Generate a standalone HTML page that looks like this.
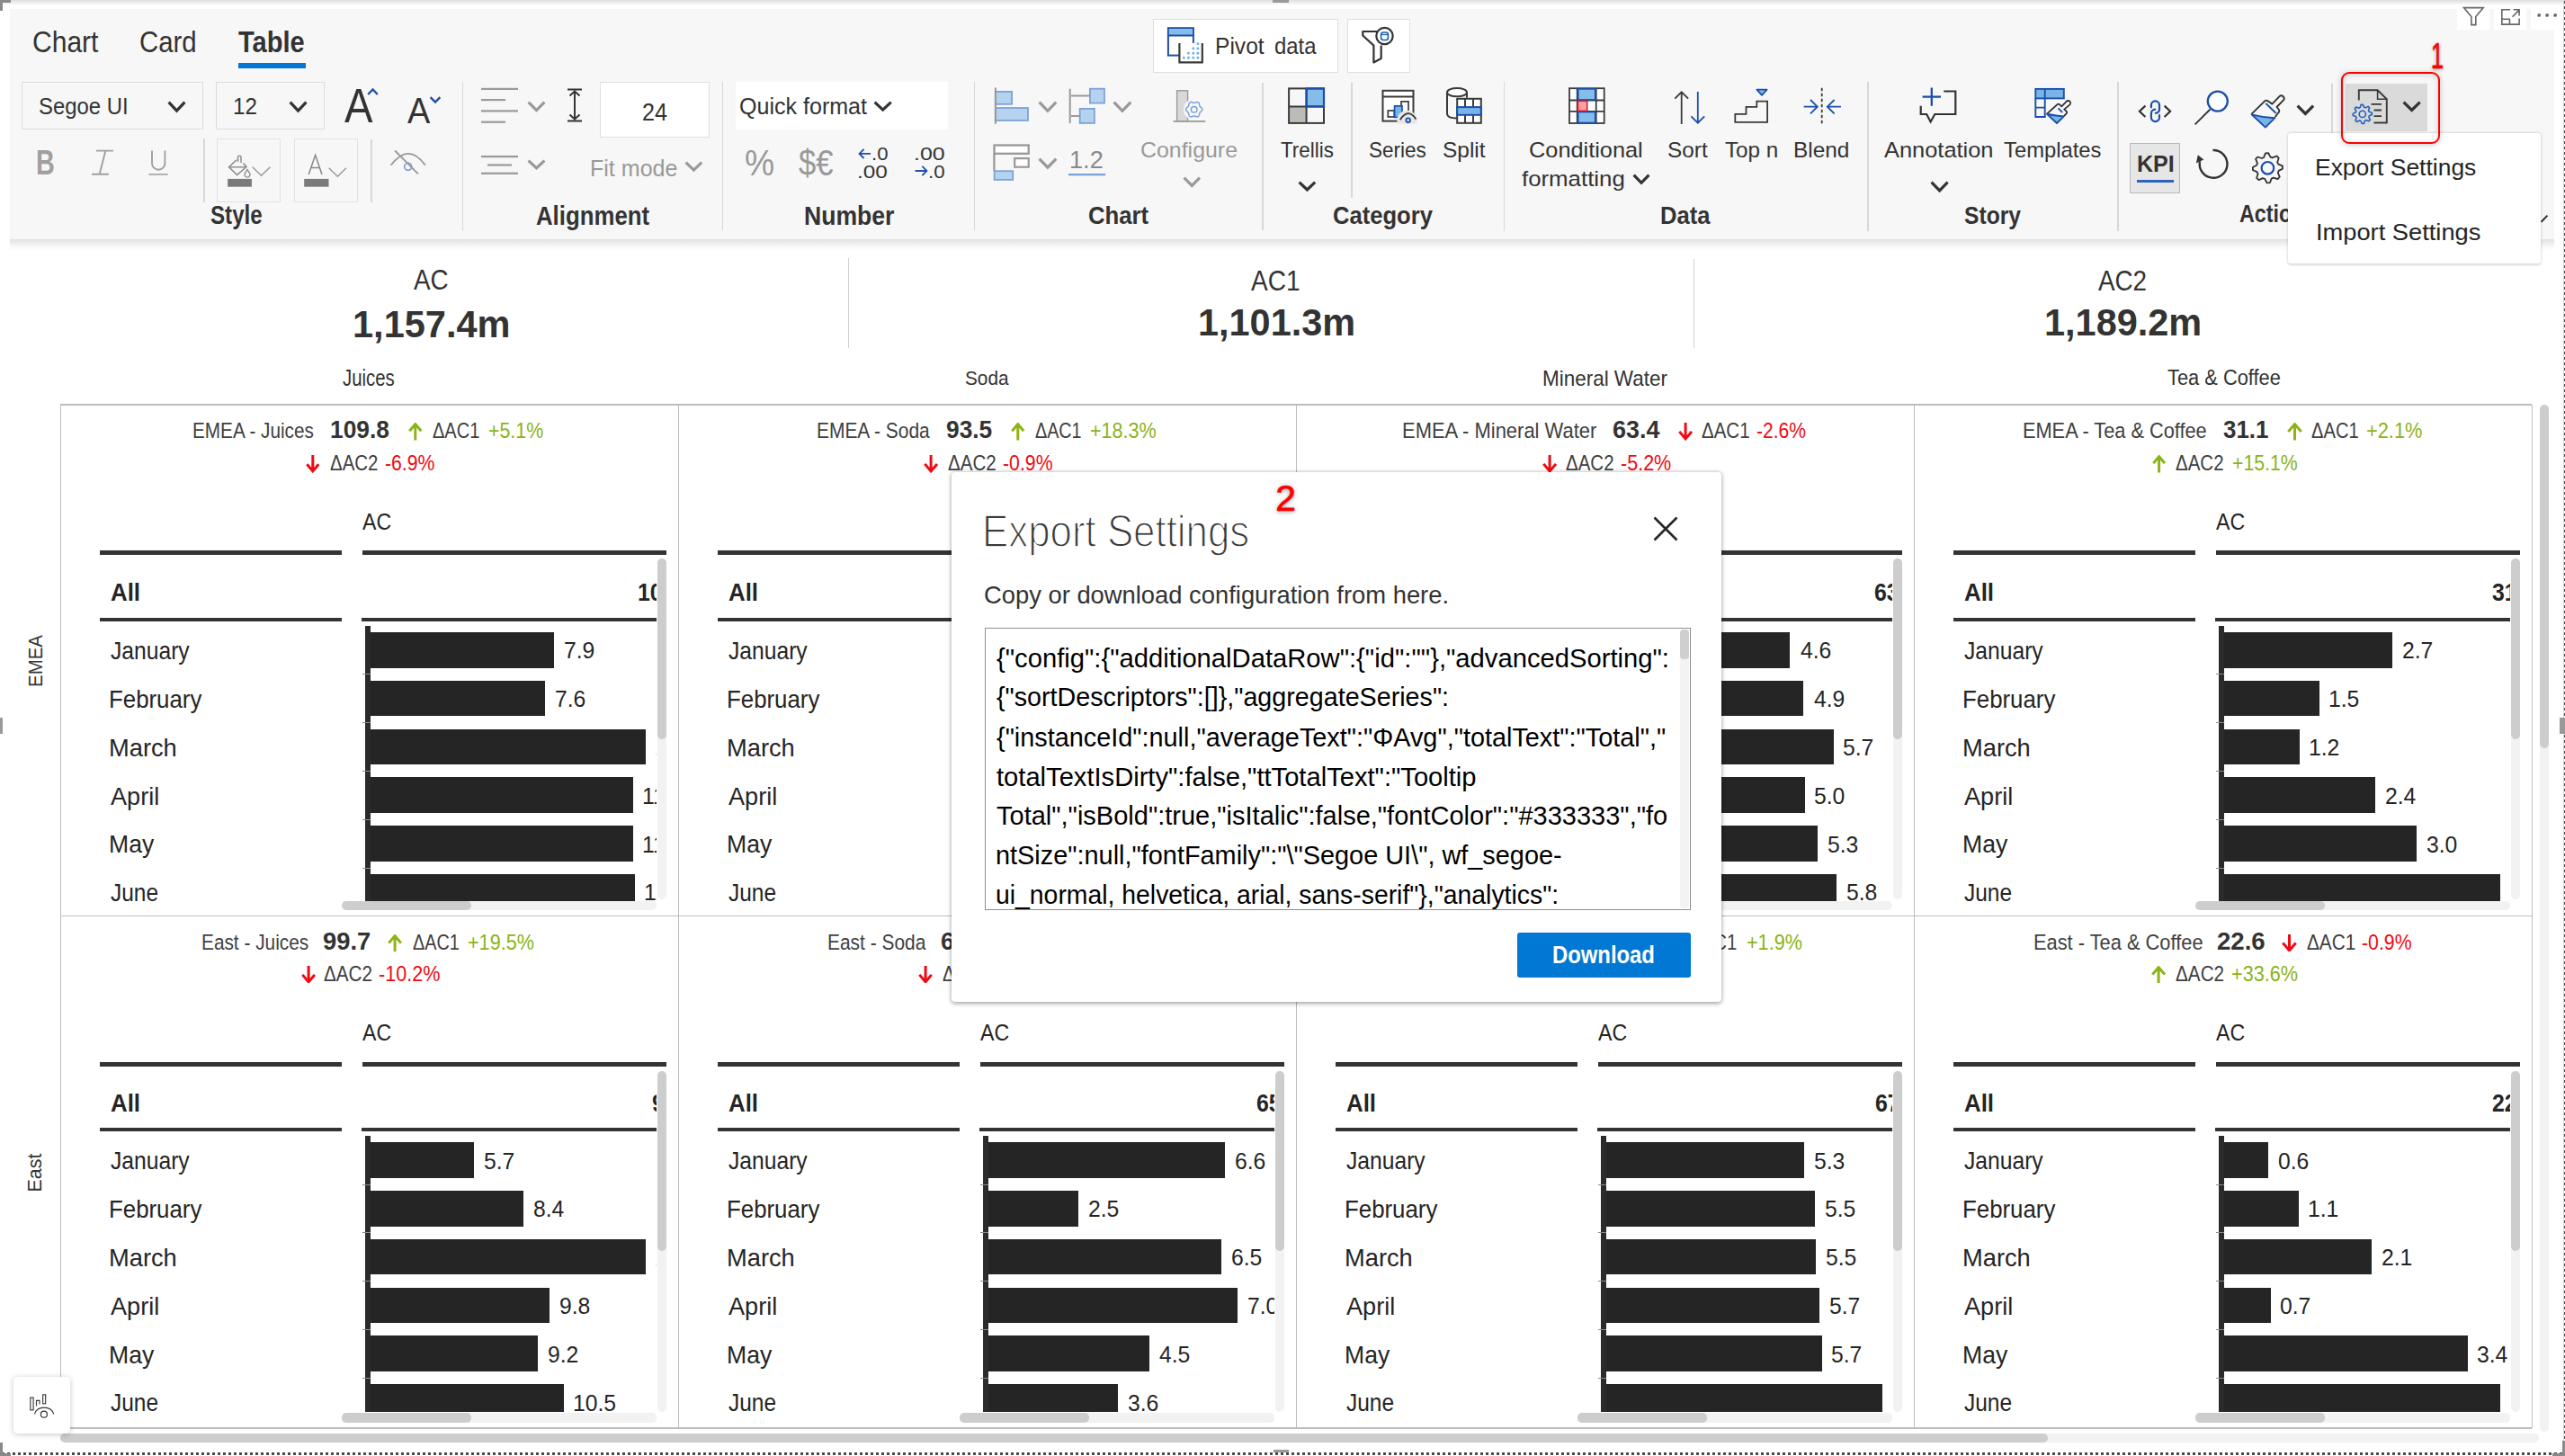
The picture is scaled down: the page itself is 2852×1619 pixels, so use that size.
<!DOCTYPE html>
<html><head><meta charset="utf-8"><style>
html,body{margin:0;padding:0;width:2852px;height:1619px;overflow:hidden;background:#fff;position:relative;font-family:'Liberation Sans', sans-serif;}
.t{position:absolute;white-space:pre;transform-origin:0 0;}
.a{position:absolute;}
</style></head><body>
<div style="position:absolute;left:11.0px;top:10.0px;width:2829.0px;height:256.0px;background:#f7f7f7;"></div>
<div style="position:absolute;left:11.0px;top:266.0px;width:2829.0px;height:13.0px;background:linear-gradient(rgba(0,0,0,0.115),rgba(0,0,0,0.03) 60%,rgba(0,0,0,0));"></div>
<div style="position:absolute;left:265.0px;top:70.0px;width:75.0px;height:6.0px;background:#0078d4;"></div>
<div style="position:absolute;left:513.5px;top:91.0px;width:1.5px;height:165.5px;background:#d8d8d8;"></div>
<div style="position:absolute;left:802.6px;top:91.0px;width:1.5px;height:165.0px;background:#d8d8d8;"></div>
<div style="position:absolute;left:1082.7px;top:91.0px;width:1.5px;height:165.0px;background:#d8d8d8;"></div>
<div style="position:absolute;left:1403.2px;top:91.7px;width:1.5px;height:164.3px;background:#d8d8d8;"></div>
<div style="position:absolute;left:1502.2px;top:91.7px;width:1.5px;height:128.8px;background:#d8d8d8;"></div>
<div style="position:absolute;left:1671.5px;top:91.3px;width:1.5px;height:165.7px;background:#d8d8d8;"></div>
<div style="position:absolute;left:2076.1px;top:91.3px;width:1.5px;height:165.7px;background:#d8d8d8;"></div>
<div style="position:absolute;left:2354.2px;top:91.0px;width:1.5px;height:166.0px;background:#d8d8d8;"></div>
<div style="position:absolute;left:2592.2px;top:92.7px;width:1.5px;height:164.3px;background:#d8d8d8;"></div>
<div style="position:absolute;left:226.3px;top:154.4px;width:1.5px;height:70.6px;background:#d8d8d8;"></div>
<div style="position:absolute;left:412.0px;top:154.5px;width:1.5px;height:70.5px;background:#d8d8d8;"></div>
<div style="position:absolute;left:24.0px;top:91.0px;width:201.7px;height:53.0px;background:transparent;box-sizing:border-box;border:1.5px solid #dcdcdc;"></div>
<div style="position:absolute;left:240.0px;top:91.0px;width:120.5px;height:53.0px;background:transparent;box-sizing:border-box;border:1.5px solid #dcdcdc;"></div>
<svg class="a" style="left:95px;top:160px" width="100" height="40" viewBox="95 160 100 40"><path d="M107,167.6 H126 M102,193.8 H120.8 M117.3,167.8 L110.7,193.6" fill="none" stroke="#a0a0a0" stroke-width="1.9"/><path d="M169,167.4 V181.5 A7.2,7.2 0 0 0 183.4,181.5 V167.4" fill="none" stroke="#a0a0a0" stroke-width="1.9"/><rect x="165.4" y="193.1" width="21.4" height="1.6" fill="#a0a0a0"/></svg>
<div style="position:absolute;left:241.4px;top:154.4px;width:70.5px;height:70.6px;background:transparent;box-sizing:border-box;border:1.5px solid #e2e2e2;"></div>
<div style="position:absolute;left:326.7px;top:154.4px;width:71.0px;height:70.6px;background:transparent;box-sizing:border-box;border:1.5px solid #e2e2e2;"></div>
<div style="position:absolute;left:666.6px;top:91.0px;width:122.4px;height:62.0px;background:#fff;box-sizing:border-box;border:1.5px solid #e0e0e0;"></div>
<div style="position:absolute;left:817.8px;top:91.0px;width:236.2px;height:53.4px;background:#fff;"></div>
<div style="position:absolute;left:1282.3px;top:21.0px;width:206.1px;height:60.3px;background:#fff;box-sizing:border-box;border:1.5px solid #dedede;"></div>
<div style="position:absolute;left:1498.0px;top:21.0px;width:69.8px;height:60.3px;background:#fff;box-sizing:border-box;border:1.5px solid #dedede;"></div>
<div style="position:absolute;left:1188.0px;top:193.3px;width:41.0px;height:2.2px;background:#5b8fd6;"></div>
<div style="position:absolute;left:2368.2px;top:158.7px;width:56.3px;height:56.0px;background:#e6e6e6;box-sizing:border-box;border:1.5px solid #b8b8b8;"></div>
<div style="position:absolute;left:2376.0px;top:200.0px;width:40.5px;height:2.5px;background:#2b63c4;"></div>
<div style="position:absolute;left:2607.5px;top:92.7px;width:91.5px;height:53.2px;background:#dadada;"></div>
<div style="position:absolute;left:2731.5px;top:0.0px;width:36.1px;height:32.6px;background:#fff;"></div>
<div style="position:absolute;left:2772.7px;top:0.0px;width:36.1px;height:32.6px;background:#fff;"></div>
<div style="position:absolute;left:2814.0px;top:0.0px;width:26.7px;height:32.6px;background:#fff;"></div>
<div class="t" style="left:35.69px;top:30.57px;font:400 32.86px 'Liberation Sans', sans-serif;line-height:1;color:#333;transform:scaleX(0.9139);">Chart</div>
<div class="t" style="left:155.11px;top:30.57px;font:400 32.86px 'Liberation Sans', sans-serif;line-height:1;color:#333;transform:scaleX(0.8934);">Card</div>
<div class="t" style="left:265.00px;top:30.57px;font:700 32.86px 'Liberation Sans', sans-serif;line-height:1;color:#333;transform:scaleX(0.8844);">Table</div>
<div class="t" style="left:43.07px;top:106.14px;font:400 25.71px 'Liberation Sans', sans-serif;line-height:1;color:#333;transform:scaleX(0.9286);">Segoe UI</div>
<div class="t" style="left:259.06px;top:106.14px;font:400 25.71px 'Liberation Sans', sans-serif;line-height:1;color:#333;transform:scaleX(0.9393);">12</div>
<div class="t" style="left:382.50px;top:90.86px;font:400 54.29px 'Liberation Sans', sans-serif;line-height:1;color:#333;transform:scaleX(0.8703);">A</div>
<div class="t" style="left:453.00px;top:101.79px;font:400 41.43px 'Liberation Sans', sans-serif;line-height:1;color:#333;transform:scaleX(0.9143);">A</div>
<div class="t" style="left:40.00px;top:161.71px;font:700 38.57px 'Liberation Sans', sans-serif;line-height:1;color:#a0a0a0;transform:scaleX(0.7480);">B</div>
<div class="t" style="left:233.70px;top:225.31px;font:700 28.57px 'Liberation Sans', sans-serif;line-height:1;color:#333;transform:scaleX(0.8459);">Style</div>
<div class="t" style="left:714.07px;top:110.93px;font:400 27.14px 'Liberation Sans', sans-serif;line-height:1;color:#333;transform:scaleX(0.9283);">24</div>
<div class="t" style="left:656.01px;top:175.23px;font:400 25.14px 'Liberation Sans', sans-serif;line-height:1;color:#999;transform:scaleX(0.9972);">Fit mode</div>
<div class="t" style="left:596.00px;top:226.01px;font:700 28.57px 'Liberation Sans', sans-serif;line-height:1;color:#333;transform:scaleX(0.9028);">Alignment</div>
<div class="t" style="left:821.73px;top:106.44px;font:400 25.71px 'Liberation Sans', sans-serif;line-height:1;color:#333;transform:scaleX(0.9748);">Quick format</div>
<div class="t" style="left:828.09px;top:160.67px;font:400 40.86px 'Liberation Sans', sans-serif;line-height:1;color:#999;transform:scaleX(0.9118);">%</div>
<div class="t" style="left:888.00px;top:160.67px;font:400 40.86px 'Liberation Sans', sans-serif;line-height:1;color:#999;transform:scaleX(0.8464);">$€</div>
<div class="t" style="left:893.57px;top:226.01px;font:700 28.57px 'Liberation Sans', sans-serif;line-height:1;color:#333;transform:scaleX(0.9307);">Number</div>
<div class="t" style="left:1351.08px;top:38.76px;font:400 25.57px 'Liberation Sans', sans-serif;line-height:1;color:#333;transform:scaleX(0.9611);">Pivot</div>
<div class="t" style="left:1416.97px;top:38.76px;font:400 25.57px 'Liberation Sans', sans-serif;line-height:1;color:#333;transform:scaleX(0.9347);">data</div>
<div class="t" style="left:1268.39px;top:154.71px;font:400 24.57px 'Liberation Sans', sans-serif;line-height:1;color:#999;transform:scaleX(1.0139);">Configure</div>
<div class="t" style="left:1189.00px;top:163.63px;font:400 27.14px 'Liberation Sans', sans-serif;line-height:1;color:#8a8a8a;transform:scaleX(1.0023);">1.2</div>
<div class="t" style="left:1209.88px;top:226.02px;font:700 27.86px 'Liberation Sans', sans-serif;line-height:1;color:#333;transform:scaleX(0.9234);">Chart</div>
<div class="t" style="left:1423.60px;top:154.71px;font:400 24.57px 'Liberation Sans', sans-serif;line-height:1;color:#333;transform:scaleX(0.9113);">Trellis</div>
<div class="t" style="left:1522.08px;top:154.71px;font:400 24.57px 'Liberation Sans', sans-serif;line-height:1;color:#333;transform:scaleX(0.9175);">Series</div>
<div class="t" style="left:1604.31px;top:154.71px;font:400 24.57px 'Liberation Sans', sans-serif;line-height:1;color:#333;transform:scaleX(0.9945);">Split</div>
<div class="t" style="left:1482.48px;top:226.02px;font:700 27.86px 'Liberation Sans', sans-serif;line-height:1;color:#333;transform:scaleX(0.9180);">Category</div>
<div class="t" style="left:1700.47px;top:154.99px;font:400 24.71px 'Liberation Sans', sans-serif;line-height:1;color:#333;transform:scaleX(1.0255);">Conditional</div>
<div class="t" style="left:1692.00px;top:186.79px;font:400 24.71px 'Liberation Sans', sans-serif;line-height:1;color:#333;transform:scaleX(1.0449);">formatting</div>
<div class="t" style="left:1854.01px;top:154.99px;font:400 24.71px 'Liberation Sans', sans-serif;line-height:1;color:#333;transform:scaleX(0.9856);">Sort</div>
<div class="t" style="left:1918.00px;top:154.99px;font:400 24.71px 'Liberation Sans', sans-serif;line-height:1;color:#333;transform:scaleX(0.9817);">Top n</div>
<div class="t" style="left:1994.02px;top:154.99px;font:400 24.71px 'Liberation Sans', sans-serif;line-height:1;color:#333;transform:scaleX(0.9877);">Blend</div>
<div class="t" style="left:1846.08px;top:226.32px;font:700 27.86px 'Liberation Sans', sans-serif;line-height:1;color:#333;transform:scaleX(0.9183);">Data</div>
<div class="t" style="left:2095.30px;top:154.99px;font:400 24.71px 'Liberation Sans', sans-serif;line-height:1;color:#333;transform:scaleX(1.0282);">Annotation</div>
<div class="t" style="left:2228.20px;top:154.99px;font:400 24.71px 'Liberation Sans', sans-serif;line-height:1;color:#333;transform:scaleX(0.9632);">Templates</div>
<div class="t" style="left:2184.00px;top:226.32px;font:700 27.86px 'Liberation Sans', sans-serif;line-height:1;color:#333;transform:scaleX(0.8840);">Story</div>
<div class="t" style="left:2375.76px;top:169.01px;font:700 26.57px 'Liberation Sans', sans-serif;line-height:1;color:#333;transform:scaleX(0.9427);">KPI</div>
<div class="t" style="left:2490.00px;top:223.86px;font:700 27.57px 'Liberation Sans', sans-serif;line-height:1;color:#333;transform:scaleX(0.8437);">Actions</div>
<svg class="a" style="left:183.6px;top:110.0px;overflow:visible" width="25.0" height="17.0" viewBox="183.6 110.0 25.0 17.0"><path d="M187.20,113.60 L196.10,123.08 L205.00,113.60" fill="none" stroke="#333" stroke-width="3.2" stroke-linejoin="miter"/></svg>
<svg class="a" style="left:319.0px;top:110.0px;overflow:visible" width="25.0" height="17.0" viewBox="319.0 110.0 25.0 17.0"><path d="M322.60,113.60 L331.50,123.08 L340.40,113.60" fill="none" stroke="#333" stroke-width="3.2" stroke-linejoin="miter"/></svg>
<svg class="a" style="left:969.4px;top:110.0px;overflow:visible" width="25.3" height="16.0" viewBox="969.4 110.0 25.3 16.0"><path d="M973.00,113.60 L982.05,122.08 L991.10,113.60" fill="none" stroke="#333" stroke-width="3.2" stroke-linejoin="miter"/></svg>
<svg class="a" style="left:1441.0px;top:198.5px;overflow:visible" width="24.8" height="15.9" viewBox="1441.0 198.5 24.8 15.9"><path d="M1444.60,202.10 L1453.40,210.48 L1462.20,202.10" fill="none" stroke="#333" stroke-width="3.2" stroke-linejoin="miter"/></svg>
<svg class="a" style="left:1813.0px;top:191.4px;overflow:visible" width="24.0" height="16.2" viewBox="1813.0 191.4 24.0 16.2"><path d="M1816.60,195.00 L1825.00,203.68 L1833.40,195.00" fill="none" stroke="#333" stroke-width="3.2" stroke-linejoin="miter"/></svg>
<svg class="a" style="left:2143.8px;top:198.5px;overflow:visible" width="25.2" height="16.8" viewBox="2143.8 198.5 25.2 16.8"><path d="M2147.40,202.10 L2156.40,211.38 L2165.40,202.10" fill="none" stroke="#333" stroke-width="3.2" stroke-linejoin="miter"/></svg>
<svg class="a" style="left:2550.6px;top:114.4px;overflow:visible" width="24.7" height="16.4" viewBox="2550.6 114.4 24.7 16.4"><path d="M2554.20,118.00 L2562.95,126.88 L2571.70,118.00" fill="none" stroke="#333" stroke-width="3.2" stroke-linejoin="miter"/></svg>
<svg class="a" style="left:2668.7px;top:110.3px;overflow:visible" width="25.3" height="16.4" viewBox="2668.7 110.3 25.3 16.4"><path d="M2672.30,113.90 L2681.35,122.78 L2690.40,113.90" fill="none" stroke="#333" stroke-width="3.2" stroke-linejoin="miter"/></svg>
<svg class="a" style="left:583.5px;top:110.0px;overflow:visible" width="25.0" height="16.5" viewBox="583.5 110.0 25.0 16.5"><path d="M587.10,113.60 L596.00,122.58 L604.90,113.60" fill="none" stroke="#999" stroke-width="3.2" stroke-linejoin="miter"/></svg>
<svg class="a" style="left:583.5px;top:174.6px;overflow:visible" width="25.0" height="15.8" viewBox="583.5 174.6 25.0 15.8"><path d="M587.10,178.20 L596.00,186.48 L604.90,178.20" fill="none" stroke="#999" stroke-width="3.2" stroke-linejoin="miter"/></svg>
<svg class="a" style="left:758.7px;top:177.0px;overflow:visible" width="24.8" height="16.0" viewBox="758.7 177.0 24.8 16.0"><path d="M762.30,180.60 L771.10,189.08 L779.90,180.60" fill="none" stroke="#999" stroke-width="3.2" stroke-linejoin="miter"/></svg>
<svg class="a" style="left:1151.9px;top:109.8px;overflow:visible" width="25.9" height="17.2" viewBox="1151.9 109.8 25.9 17.2"><path d="M1155.50,113.40 L1164.85,123.08 L1174.20,113.40" fill="none" stroke="#999" stroke-width="3.2" stroke-linejoin="miter"/></svg>
<svg class="a" style="left:1234.9px;top:109.8px;overflow:visible" width="25.9" height="17.2" viewBox="1234.9 109.8 25.9 17.2"><path d="M1238.50,113.40 L1247.85,123.08 L1257.20,113.40" fill="none" stroke="#999" stroke-width="3.2" stroke-linejoin="miter"/></svg>
<svg class="a" style="left:1151.9px;top:172.9px;overflow:visible" width="25.9" height="17.1" viewBox="1151.9 172.9 25.9 17.1"><path d="M1155.50,176.50 L1164.85,186.08 L1174.20,176.50" fill="none" stroke="#999" stroke-width="3.2" stroke-linejoin="miter"/></svg>
<svg class="a" style="left:1313.4px;top:193.9px;overflow:visible" width="24.6" height="16.4" viewBox="1313.4 193.9 24.6 16.4"><path d="M1317.00,197.50 L1325.70,206.38 L1334.40,197.50" fill="none" stroke="#999" stroke-width="3.2" stroke-linejoin="miter"/></svg>
<svg class="a" style="left:277.9px;top:183.1px;overflow:visible" width="25.1" height="15.2" viewBox="277.9 183.1 25.1 15.2"><path d="M280.60,185.80 L290.45,195.46 L300.30,185.80" fill="none" stroke="#999" stroke-width="1.4" stroke-linejoin="miter"/></svg>
<svg class="a" style="left:363.3px;top:183.5px;overflow:visible" width="24.7" height="15.0" viewBox="363.3 183.5 24.7 15.0"><path d="M366.00,186.20 L375.65,195.66 L385.30,186.20" fill="none" stroke="#999" stroke-width="1.4" stroke-linejoin="miter"/></svg>
<svg class="a" style="left:400.0px;top:90.0px;overflow:visible" width="100.0" height="30.0" viewBox="400.0 90.0 100.0 30.0"><path d="M409.2,105 L414.5,99.5 L419.8,105" fill="none" stroke="#1f4fa8" stroke-width="2.4"/><path d="M478.6,108.2 L484,113.6 L489.3,108.2" fill="none" stroke="#1f4fa8" stroke-width="2.4"/></svg>
<svg class="a" style="left:530.0px;top:95.0px;overflow:visible" width="50.0" height="105.0" viewBox="530.0 95.0 50.0 105.0"><rect x="535" y="97.8" width="41" height="2.2" fill="#9a9a9a"/><rect x="535" y="110" width="27" height="2.2" fill="#9a9a9a"/><rect x="535" y="122.3" width="41" height="2.2" fill="#9a9a9a"/><rect x="535" y="134.6" width="27" height="2.2" fill="#9a9a9a"/><rect x="535" y="173" width="41" height="2.2" fill="#9a9a9a"/><rect x="542" y="182.4" width="27" height="2.2" fill="#9a9a9a"/><rect x="535" y="191.7" width="41" height="2.2" fill="#9a9a9a"/></svg>
<svg class="a" style="left:628.0px;top:96.0px;overflow:visible" width="22.0" height="42.0" viewBox="628.0 96.0 22.0 42.0"><path d="M631,99.6 H647 M631,134.4 H647 M639,101 V133 M633.5,106.5 L639,101.5 L644.5,106.5 M633.5,127.5 L639,132.5 L644.5,127.5" fill="none" stroke="#333" stroke-width="2"/></svg>
<svg class="a" style="left:430.0px;top:164.0px;overflow:visible" width="48.0" height="33.0" viewBox="430.0 164.0 48.0 33.0"><path d="M434.6,183.8 Q454.2,158 472.8,183.6" fill="none" stroke="#999" stroke-width="1.8"/><circle cx="453.7" cy="185.3" r="4" fill="none" stroke="#6d9ad6" stroke-width="1.6"/><path d="M439.1,167.5 L464.9,193.4" stroke="#999" stroke-width="1.8"/></svg>
<svg class="a" style="left:250.0px;top:168.0px;overflow:visible" width="32.0" height="42.0" viewBox="250.0 168.0 32.0 42.0"><path d="M264.5,180 V174.5 A1.8,1.8 0 0 1 268,174.5 V181" fill="none" stroke="#888" stroke-width="1.4"/><path d="M270.5,181.5 L274,185.5 L263.6,194.6 L254.6,185.8 L263,177.8" fill="none" stroke="#888" stroke-width="1.5"/><path d="M255,185.8 H273" stroke="#888" stroke-width="1.4"/><path d="M275,188.5 L277.6,192.6 A3,3 0 1 1 272.4,192.6 Z" fill="none" stroke="#888" stroke-width="1.3"/><rect x="253.1" y="198.9" width="26.8" height="8.8" fill="#7a7a7a"/></svg>
<svg class="a" style="left:336.0px;top:168.0px;overflow:visible" width="32.0" height="42.0" viewBox="336.0 168.0 32.0 42.0"><path d="M343.2,193.9 L350.6,172.6 L358,193.9 M345.6,186.5 H355.6" fill="none" stroke="#888" stroke-width="1.5"/><rect x="338.2" y="198.9" width="27.3" height="8.8" fill="#7a7a7a"/></svg>
<svg class="a" style="left:950.0px;top:160.0px;overflow:visible" width="90.0" height="40.0" viewBox="950.0 160.0 90.0 40.0"><path d="M955.5,170.9 H968 M960.6,165.8 L955.5,170.9 L960.6,176" fill="none" stroke="#1f4fa8" stroke-width="1.8"/><path d="M1017.6,190 H1030.5 M1025.4,184.9 L1030.5,190 L1025.4,195.1" fill="none" stroke="#1f4fa8" stroke-width="1.8"/></svg>
<svg class="a" style="left:1100.0px;top:94.0px;overflow:visible" width="162.0" height="111.0" viewBox="1100.0 94.0 162.0 111.0"><rect x="1106.8" y="101.9" width="18.3" height="13.9" fill="#b5d3ef" stroke="#7aa3d6" stroke-width="1.8"/><rect x="1106.8" y="120" width="36.2" height="13.9" fill="#b5d3ef" stroke="#7aa3d6" stroke-width="1.8"/><path d="M1106.9,97.4 V137.8" stroke="#999" stroke-width="2"/><path d="M1189.7,98.7 V137 M1191,106.5 H1211 M1191,128.9 H1200" stroke="#999" stroke-width="2"/><rect x="1211.9" y="98.7" width="16.1" height="15.9" fill="#b5d3ef" stroke="#7aa3d6" stroke-width="1.8"/><rect x="1200.7" y="120.9" width="16.2" height="16" fill="#b5d3ef" stroke="#7aa3d6" stroke-width="1.8"/><rect x="1105.5" y="161.5" width="38.2" height="9.3" fill="#fff" stroke="#999" stroke-width="2.3"/><path d="M1105.4,170.8 V190" stroke="#999" stroke-width="2.3"/><rect x="1128.2" y="176.1" width="15.5" height="9.6" fill="#fff" stroke="#999" stroke-width="2.2"/><rect x="1105.6" y="190.2" width="20.6" height="9.7" fill="#b5d3ef" stroke="#7aa3d6" stroke-width="1.8"/><rect x="1188.1" y="193" width="40.8" height="2.3" fill="#7aa3d6"/></svg>
<svg class="a" style="left:1300.0px;top:96.0px;overflow:visible" width="45.0" height="44.0" viewBox="1300.0 96.0 45.0 44.0"><rect x="1308.6" y="100.8" width="12" height="34" fill="#d9d8d7" stroke="#9a9a9a" stroke-width="1.4"/><rect x="1304.6" y="134" width="35.6" height="1.8" fill="#9a9a9a"/><circle cx="1327.7" cy="121.7" r="11.6" fill="#f7f7f7"/><path d="M1336.80,121.70 L1336.74,122.17 L1336.58,122.63 L1336.32,123.07 L1335.99,123.46 L1335.62,123.82 L1335.23,124.15 L1334.86,124.45 L1334.53,124.74 L1334.24,125.03 L1334.02,125.35 L1333.86,125.70 L1333.74,126.09 L1333.66,126.53 L1333.59,127.00 L1333.50,127.50 L1333.37,128.00 L1333.19,128.48 L1332.95,128.92 L1332.63,129.29 L1332.25,129.58 L1331.81,129.77 L1331.33,129.86 L1330.83,129.85 L1330.32,129.76 L1329.82,129.62 L1329.35,129.45 L1328.90,129.28 L1328.48,129.13 L1328.08,129.03 L1327.70,129.00 L1327.32,129.03 L1326.92,129.13 L1326.50,129.28 L1326.05,129.45 L1325.58,129.62 L1325.08,129.76 L1324.57,129.85 L1324.07,129.86 L1323.59,129.77 L1323.15,129.58 L1322.77,129.29 L1322.45,128.92 L1322.21,128.48 L1322.03,128.00 L1321.90,127.50 L1321.81,127.00 L1321.74,126.53 L1321.66,126.09 L1321.54,125.70 L1321.38,125.35 L1321.16,125.03 L1320.87,124.74 L1320.54,124.45 L1320.17,124.15 L1319.78,123.82 L1319.41,123.46 L1319.08,123.07 L1318.82,122.63 L1318.66,122.17 L1318.60,121.70 L1318.66,121.23 L1318.82,120.77 L1319.08,120.33 L1319.41,119.94 L1319.78,119.58 L1320.17,119.25 L1320.54,118.95 L1320.87,118.66 L1321.16,118.37 L1321.38,118.05 L1321.54,117.70 L1321.66,117.31 L1321.74,116.87 L1321.81,116.40 L1321.90,115.90 L1322.03,115.40 L1322.21,114.92 L1322.45,114.48 L1322.77,114.11 L1323.15,113.82 L1323.59,113.63 L1324.07,113.54 L1324.57,113.55 L1325.08,113.64 L1325.58,113.78 L1326.05,113.95 L1326.50,114.12 L1326.92,114.27 L1327.32,114.37 L1327.70,114.40 L1328.08,114.37 L1328.48,114.27 L1328.90,114.12 L1329.35,113.95 L1329.82,113.78 L1330.32,113.64 L1330.83,113.55 L1331.33,113.54 L1331.81,113.63 L1332.25,113.82 L1332.63,114.11 L1332.95,114.48 L1333.19,114.92 L1333.37,115.40 L1333.50,115.90 L1333.59,116.40 L1333.66,116.87 L1333.74,117.31 L1333.86,117.70 L1334.02,118.05 L1334.24,118.37 L1334.53,118.66 L1334.86,118.95 L1335.23,119.25 L1335.62,119.58 L1335.99,119.94 L1336.32,120.33 L1336.58,120.77 L1336.74,121.23 L1336.80,121.70 Z" fill="none" stroke="#7aa3d6" stroke-width="1.5"/><circle cx="1327.7" cy="121.7" r="3.3" fill="none" stroke="#7aa3d6" stroke-width="1.5"/></svg>
<svg class="a" style="left:1295.0px;top:27.0px;overflow:visible" width="47.0" height="46.0" viewBox="1295.0 27.0 47.0 46.0"><rect x="1298.9" y="31.2" width="28" height="30.4" fill="#fff" stroke="#1a4faa" stroke-width="2"/><rect x="1299.9" y="32.2" width="26" height="6.8" fill="#85bdea"/><path d="M1298.9,39.5 H1326.9" stroke="#1a4faa" stroke-width="2"/><rect x="1311.4" y="47.9" width="25.4" height="21.5" fill="#fff"/><path d="M1311.4,47.9 V69.4 H1336.8 V47.9" fill="none" stroke="#3a3a3a" stroke-width="2.2"/><rect x="1330.6" y="47.3" width="2.6" height="2.6" fill="#6fb0e8"/><rect x="1325.5" y="52.6" width="2.6" height="2.6" fill="#6fb0e8"/><rect x="1330.6" y="52.6" width="2.6" height="2.6" fill="#6fb0e8"/><rect x="1320.1" y="57.9" width="2.6" height="2.6" fill="#6fb0e8"/><rect x="1325.5" y="57.9" width="2.6" height="2.6" fill="#6fb0e8"/><rect x="1330.6" y="57.9" width="2.6" height="2.6" fill="#6fb0e8"/><rect x="1315.0" y="62.9" width="2.6" height="2.6" fill="#6fb0e8"/><rect x="1320.1" y="62.9" width="2.6" height="2.6" fill="#6fb0e8"/><rect x="1325.5" y="62.9" width="2.6" height="2.6" fill="#6fb0e8"/><rect x="1330.6" y="62.9" width="2.6" height="2.6" fill="#6fb0e8"/></svg>
<svg class="a" style="left:1510.0px;top:26.0px;overflow:visible" width="45.0" height="48.0" viewBox="1510.0 26.0 45.0 48.0"><path d="M1531,35 H1515.3 V39.5 L1527.4,50.5 V69.5 L1535.7,65 V50.5" fill="none" stroke="#333" stroke-width="2.2" stroke-linejoin="round"/><circle cx="1539.5" cy="40" r="9.2" fill="#fff" stroke="#333" stroke-width="2.2"/><rect x="1535.6" y="36" width="7.8" height="8.5" rx="2.5" fill="none" stroke="#1a5fb4" stroke-width="1.6"/><path d="M1535.6,38.5 H1543.4" stroke="#1a5fb4" stroke-width="1.2"/></svg>
<svg class="a" style="left:1430.0px;top:95.0px;overflow:visible" width="46.0" height="45.0" viewBox="1430.0 95.0 46.0 45.0"><rect x="1452.6" y="98.4" width="19.4" height="20" fill="#85bdea"/><rect x="1433.1" y="118.4" width="19.5" height="18.5" fill="#bdbbb7"/><rect x="1433.1" y="98.4" width="38.9" height="38.5" fill="none" stroke="#3a3a3a" stroke-width="2"/><path d="M1452.6,98.4 V136.9 M1433.1,118.4 H1472" stroke="#3a3a3a" stroke-width="2"/><rect x="1452.6" y="98.4" width="19.4" height="20" fill="none" stroke="#1a4faa" stroke-width="2.2"/></svg>
<svg class="a" style="left:1533.0px;top:96.0px;overflow:visible" width="47.0" height="45.0" viewBox="1533.0 96.0 47.0 45.0"><rect x="1537.5" y="100.8" width="34" height="33.8" fill="#fff" stroke="#3a3a3a" stroke-width="2"/><path d="M1537.5,107.5 H1571.5" stroke="#3a3a3a" stroke-width="2"/><rect x="1543.3" y="123" width="7" height="7" fill="#fff" stroke="#3a3a3a" stroke-width="1.7"/><rect x="1558" y="112.9" width="8" height="17" fill="#fff" stroke="#3a3a3a" stroke-width="1.7"/><rect x="1550.6" y="117.8" width="8.4" height="12.6" fill="#78b4e8" stroke="#1a4faa" stroke-width="1.7"/><path d="M1553.9,137.5 A11.2,11.2 0 1 1 1575.1,137.5 Z" fill="#e6e6e6"/><path d="M1556.8,133.2 Q1565.7,119.5 1574.4,132.4" fill="none" stroke="#333" stroke-width="1.8"/><circle cx="1565.7" cy="133.7" r="2.3" fill="none" stroke="#1a4faa" stroke-width="1.8"/></svg>
<svg class="a" style="left:1605.0px;top:95.0px;overflow:visible" width="46.0" height="46.0" viewBox="1605.0 95.0 46.0 46.0"><path d="M1609,102.7 V126.5 Q1609,131.3 1620,131.5" fill="none" stroke="#3a3a3a" stroke-width="2"/><path d="M1631,102.7 V108.8" fill="none" stroke="#3a3a3a" stroke-width="2"/><ellipse cx="1620" cy="102.7" rx="11" ry="4.6" fill="#fff" stroke="#3a3a3a" stroke-width="2"/><rect x="1620.2" y="109.8" width="26.6" height="27" fill="#fff" stroke="#3a3a3a" stroke-width="2"/><path d="M1629,109.8 V136.8 M1638,109.8 V136.8" stroke="#3a3a3a" stroke-width="2"/><rect x="1620.2" y="119.1" width="26.6" height="8.7" fill="#78b4e8" stroke="#1a4faa" stroke-width="2"/></svg>
<svg class="a" style="left:1741.0px;top:94.0px;overflow:visible" width="47.0" height="47.0" viewBox="1741.0 94.0 47.0 47.0"><rect x="1745" y="98.2" width="38.7" height="38.8" fill="#fff" stroke="#3a3a3a" stroke-width="1.8"/><path d="M1745,111.5 H1783.7 M1745,123.9 H1783.7 M1753.7,98.2 V137 M1774.7,98.2 V137" stroke="#3a3a3a" stroke-width="1.8"/><rect x="1754.6" y="98.8" width="19.2" height="12.2" fill="#85bdea" stroke="#1a4faa" stroke-width="1.8"/><rect x="1754.6" y="124.4" width="19.2" height="12.2" fill="#85bdea" stroke="#1a4faa" stroke-width="1.8"/><rect x="1754.4" y="112.3" width="10.3" height="11" fill="#ffa0a8" stroke="#d0202a" stroke-width="1.6"/></svg>
<svg class="a" style="left:1858.0px;top:98.0px;overflow:visible" width="42.0" height="42.0" viewBox="1858.0 98.0 42.0 42.0"><path d="M1869.7,102.5 V138 M1862.3,109.7 L1869.7,102.3 L1877.1,109.7" fill="none" stroke="#3a3a3a" stroke-width="1.8"/><path d="M1887.8,101.9 V136.7 M1880.4,129.3 L1887.8,136.7 L1895.2,129.3" fill="none" stroke="#1a4faa" stroke-width="1.8"/></svg>
<svg class="a" style="left:1925.0px;top:95.0px;overflow:visible" width="45.0" height="45.0" viewBox="1925.0 95.0 45.0 45.0"><path d="M1929.3,135.9 V126.8 H1941.5 V118.9 H1953.3 V112.7 H1965.1 V135.9 Z" fill="none" stroke="#3a3a3a" stroke-width="1.8"/><path d="M1953.4,99.6 H1964.6 L1959,105.8 Z" fill="#85bdea" stroke="#1a4faa" stroke-width="1.8" stroke-linejoin="round"/></svg>
<svg class="a" style="left:2002.0px;top:95.0px;overflow:visible" width="48.0" height="45.0" viewBox="2002.0 95.0 48.0 45.0"><path d="M2025.7,97.7 V137.7" stroke="#3a3a3a" stroke-width="1.8" stroke-dasharray="3.6,2.4"/><path d="M2005.7,118.7 H2020.5 M2013,111 L2020.8,118.7 L2013,126.4 M2046.9,118.7 H2032 M2039.6,111 L2031.8,118.7 L2039.6,126.4" fill="none" stroke="#1a4faa" stroke-width="1.8"/></svg>
<svg class="a" style="left:2132.0px;top:95.0px;overflow:visible" width="46.0" height="45.0" viewBox="2132.0 95.0 46.0 45.0"><path d="M2147.8,97.4 V117.8 M2137.6,107.6 H2158" stroke="#1a4faa" stroke-width="2.3"/><path d="M2161.3,101.5 H2174.3 V127 H2151.3 L2146.6,135.5 L2142.2,127 H2135.7 V117.8" fill="none" stroke="#333" stroke-width="2.2"/></svg>
<svg class="a" style="left:2259.0px;top:95.0px;overflow:visible" width="48.0" height="46.0" viewBox="2259.0 95.0 48.0 46.0"><rect x="2263.3" y="98.9" width="31.5" height="10.5" fill="#78b4e8" stroke="#1a4faa" stroke-width="1.9"/><path d="M2263.3,109.4 V130 H2273.7 V98.9 M2263.3,119.6 H2273.7" fill="none" stroke="#1a4faa" stroke-width="1.9"/><path d="M2275.9,126.6 L2287.5,116.2 Q2288.8,115 2290.2,116.3 L2292.3,118.3 L2297.6,112.8 A2.6,2.6 0 0 1 2301.4,116.4 L2295.2,121.6 L2297.6,123.7 Q2298.8,125 2297.5,126.4 L2294.9,129" fill="#f7f7f7" stroke="#333" stroke-width="1.8" stroke-linejoin="round"/><path d="M2276,126.7 Q2285,128.6 2294.8,129.4 L2287,137 Z" fill="#78b4e8" stroke="#1a4faa" stroke-width="1.9" stroke-linejoin="round"/><path d="M2288.4,120.3 L2293.2,125" stroke="#1a4faa" stroke-width="1.8"/></svg>
<svg class="a" style="left:2374.0px;top:108.0px;overflow:visible" width="44.0" height="32.0" viewBox="2374.0 108.0 44.0 32.0"><path d="M2385.4,117.6 L2378.9,123.8 L2385.4,130" fill="none" stroke="#333" stroke-width="2.2"/><path d="M2406.6,117.6 L2413.1,123.8 L2406.6,130" fill="none" stroke="#333" stroke-width="2.2"/><path d="M2391.9,119.3 V116.9 A4.55,4.55 0 0 1 2401,116.9 V121.6 A4.2,4.2 0 0 1 2396.8,125.8 M2396.3,121.7 A4.5,4.5 0 0 0 2391.9,126.2 V130.6 A4.55,4.55 0 0 0 2401,130.6 V128" fill="none" stroke="#1a4faa" stroke-width="2.2" stroke-linecap="round"/></svg>
<svg class="a" style="left:2436.0px;top:96.0px;overflow:visible" width="46.0" height="46.0" viewBox="2436.0 96.0 46.0 46.0"><path d="M2440.6,138.4 L2457.5,121.5" stroke="#333" stroke-width="1.8"/><circle cx="2465.8" cy="112.6" r="11" fill="#fff" stroke="#1a4faa" stroke-width="2.3"/></svg>
<svg class="a" style="left:2498.0px;top:100.0px;overflow:visible" width="48.0" height="46.0" viewBox="2498.0 100.0 48.0 46.0"><path d="M2503.4,126.9 L2518.2,112.4 Q2519.8,110.9 2521.6,112.3 L2526.4,115.6 L2534.3,107.4 A3,3 0 0 1 2538.7,111.6 L2531.5,119 L2533.6,121.5 Q2535,123.4 2533.4,125.3 L2529.6,130.3" fill="none" stroke="#333" stroke-width="1.9" stroke-linejoin="round"/><path d="M2503.6,127.3 Q2516,130.6 2529.4,131.2 L2518.9,141.6 Z" fill="#78b4e8" stroke="#1a4faa" stroke-width="1.9" stroke-linejoin="round"/><path d="M2519.4,115 L2530.8,126" stroke="#1a4faa" stroke-width="1.9"/></svg>
<svg class="a" style="left:2438.0px;top:160.0px;overflow:visible" width="44.0" height="42.0" viewBox="2438.0 160.0 44.0 42.0"><path d="M2460.5,167 A15.4,15.4 0 1 1 2446,179.2" fill="none" stroke="#333" stroke-width="2.4"/><path d="M2441.9,181.5 L2443.8,172.2 L2450.3,177.6 Z" fill="#333"/></svg>
<svg class="a" style="left:2500.0px;top:166.0px;overflow:visible" width="44.0" height="43.0" viewBox="2500.0 166.0 44.0 43.0"><path d="M2518.96,170.38 L2522.21,170.22 L2524.46,174.58 L2526.79,175.41 L2531.29,173.47 L2533.70,175.65 L2532.21,180.32 L2533.26,182.56 L2537.82,184.36 L2537.98,187.61 L2533.62,189.86 L2532.79,192.19 L2534.73,196.69 L2532.55,199.10 L2527.88,197.61 L2525.64,198.66 L2523.84,203.22 L2520.59,203.38 L2518.34,199.02 L2516.01,198.19 L2511.51,200.13 L2509.10,197.95 L2510.59,193.28 L2509.54,191.04 L2504.98,189.24 L2504.82,185.99 L2509.18,183.74 L2510.01,181.41 L2508.07,176.91 L2510.25,174.50 L2514.92,175.99 L2517.16,174.94 Z" fill="none" stroke="#333" stroke-width="1.8" stroke-linejoin="round"/><circle cx="2521.4" cy="186.8" r="6.8" fill="none" stroke="#1a4faa" stroke-width="2.2"/></svg>
<svg class="a" style="left:2612.0px;top:95.0px;overflow:visible" width="48.0" height="47.0" viewBox="2612.0 95.0 48.0 47.0"><path d="M2622.8,111.5 V100.3 H2643.6 L2653.8,110.2 V136.5 H2639.5" fill="none" stroke="#3a3a3a" stroke-width="1.9" stroke-linejoin="miter"/><path d="M2643.6,100.3 V110.2 H2653.8" fill="none" stroke="#3a3a3a" stroke-width="1.6"/><path d="M2636.5,115.8 H2648 M2639.5,122.5 H2648 M2639.5,129.1 H2648" stroke="#3a3a3a" stroke-width="1.8"/><path d="M2625.24,116.41 L2627.32,116.31 L2628.70,119.33 L2630.13,119.85 L2633.11,118.39 L2634.65,119.78 L2633.49,122.89 L2634.14,124.27 L2637.29,125.34 L2637.39,127.42 L2634.37,128.80 L2633.85,130.23 L2635.31,133.21 L2633.92,134.75 L2630.81,133.59 L2629.43,134.24 L2628.36,137.39 L2626.28,137.49 L2624.90,134.47 L2623.47,133.95 L2620.49,135.41 L2618.95,134.02 L2620.11,130.91 L2619.46,129.53 L2616.31,128.46 L2616.21,126.38 L2619.23,125.00 L2619.75,123.57 L2618.29,120.59 L2619.68,119.05 L2622.79,120.21 L2624.17,119.56 Z" fill="#dadada" stroke="#1f5fbf" stroke-width="1.6" stroke-linejoin="round"/><circle cx="2626.8" cy="126.9" r="3.6" fill="none" stroke="#1f5fbf" stroke-width="1.6"/></svg>
<svg class="a" style="left:2735.0px;top:5.0px;overflow:visible" width="31.0" height="26.0" viewBox="2735.0 5.0 31.0 26.0"><path d="M2739.5,8.6 H2761.2 L2752.8,18.6 V27.6 H2747.9 V18.6 Z" fill="none" stroke="#666" stroke-width="1.6" stroke-linejoin="miter"/></svg>
<svg class="a" style="left:2778.0px;top:8.0px;overflow:visible" width="27.0" height="23.0" viewBox="2778.0 8.0 27.0 23.0"><path d="M2791,10.8 H2781.8 V27.1 H2801.1 V20.4 M2781.8,21.3 H2790.4 V27.1 M2793.5,18.7 L2801,11.2 M2794.6,10.8 H2801.1 V17.4" fill="none" stroke="#666" stroke-width="1.6"/></svg>
<svg class="a" style="left:2818.0px;top:12.0px;overflow:visible" width="28.0" height="10.0" viewBox="2818.0 12.0 28.0 10.0"><circle cx="2823.2" cy="16.9" r="1.9" fill="#666"/><circle cx="2832.1" cy="16.9" r="1.9" fill="#666"/><circle cx="2841.1" cy="16.9" r="1.9" fill="#666"/></svg>
<div class="t" style="left:968.75px;top:160.35px;font:400 21.00px 'Liberation Sans', sans-serif;line-height:1;color:#333;transform:scaleX(1.0547);">.0</div>
<div class="t" style="left:953.44px;top:180.05px;font:400 21.00px 'Liberation Sans', sans-serif;line-height:1;color:#333;transform:scaleX(1.1594);">.00</div>
<div class="t" style="left:1015.61px;top:160.35px;font:400 21.00px 'Liberation Sans', sans-serif;line-height:1;color:#333;transform:scaleX(1.1885);">.00</div>
<div class="t" style="left:1031.64px;top:180.05px;font:400 21.00px 'Liberation Sans', sans-serif;line-height:1;color:#333;transform:scaleX(1.0610);">.0</div>
<div style="position:absolute;left:942.8px;top:287.0px;width:1.5px;height:100.0px;background:#d0d0d0;"></div>
<div style="position:absolute;left:1882.7px;top:287.8px;width:1.5px;height:99.2px;background:#d0d0d0;"></div>
<div class="t" style="left:460.00px;top:296.49px;font:400 31.43px 'Liberation Sans', sans-serif;line-height:1;color:#333;transform:scaleX(0.8846);">AC</div>
<div class="t" style="left:391.86px;top:338.57px;font:700 42.86px 'Liberation Sans', sans-serif;line-height:1;color:#333;transform:scaleX(0.9689);">1,157.4m</div>
<div class="t" style="left:1391.20px;top:296.48px;font:400 32.14px 'Liberation Sans', sans-serif;line-height:1;color:#333;transform:scaleX(0.8730);">AC1</div>
<div class="t" style="left:1331.73px;top:338.08px;font:700 42.14px 'Liberation Sans', sans-serif;line-height:1;color:#333;transform:scaleX(0.9836);">1,101.3m</div>
<div class="t" style="left:2333.00px;top:296.48px;font:400 32.14px 'Liberation Sans', sans-serif;line-height:1;color:#333;transform:scaleX(0.8649);">AC2</div>
<div class="t" style="left:2273.43px;top:338.08px;font:700 42.14px 'Liberation Sans', sans-serif;line-height:1;color:#333;transform:scaleX(0.9842);">1,189.2m</div>
<div class="t" style="left:381.30px;top:408.23px;font:400 25.14px 'Liberation Sans', sans-serif;line-height:1;color:#333;transform:scaleX(0.8110);">Juices</div>
<div class="t" style="left:1073.08px;top:409.51px;font:400 22.57px 'Liberation Sans', sans-serif;line-height:1;color:#333;transform:scaleX(0.9205);">Soda</div>
<div class="t" style="left:1715.46px;top:408.60px;font:400 24.00px 'Liberation Sans', sans-serif;line-height:1;color:#333;transform:scaleX(0.9357);">Mineral Water</div>
<div class="t" style="left:2410.20px;top:409.26px;font:400 23.57px 'Liberation Sans', sans-serif;line-height:1;color:#333;transform:scaleX(0.9271);">Tea &amp; Coffee</div>
<div style="position:absolute;left:66.7px;top:449.8px;width:1.5px;height:1138.2px;background:#bdbdbd;"></div>
<div style="position:absolute;left:753.6px;top:449.8px;width:1.5px;height:1138.2px;background:#bdbdbd;"></div>
<div style="position:absolute;left:1440.7px;top:449.8px;width:1.5px;height:1138.2px;background:#bdbdbd;"></div>
<div style="position:absolute;left:2127.7px;top:449.8px;width:1.5px;height:1138.2px;background:#bdbdbd;"></div>
<div style="position:absolute;left:2814.7px;top:449.8px;width:1.5px;height:1138.2px;background:#bdbdbd;"></div>
<div style="position:absolute;left:67.4px;top:449.1px;width:2748.0px;height:1.5px;background:#bdbdbd;"></div>
<div style="position:absolute;left:67.4px;top:1017.5px;width:2748.0px;height:1.5px;background:#bdbdbd;"></div>
<div style="position:absolute;left:67.4px;top:1587.2px;width:2748.0px;height:1.5px;background:#bdbdbd;"></div>
<div class="a" style="left:40px;top:734.6px;width:0;height:0;"><div style="position:absolute;left:0;top:0;transform:translate(-50%,-50%) rotate(-90deg) scaleX(0.91);font:22.5px/1 'Liberation Sans';color:#333;white-space:pre;">EMEA</div></div>
<div class="a" style="left:38.5px;top:1303.5px;width:0;height:0;"><div style="position:absolute;left:0;top:0;transform:translate(-50%,-50%) rotate(-90deg) scaleX(0.95);font:22.5px/1 'Liberation Sans';color:#333;white-space:pre;">East</div></div>
<svg class="a" style="left:454.2px;top:470.2px" width="15.6" height="19.5" viewBox="0 0 15.6 19.5"><path d="M7.8,19.5 V2.2 M1.3,9.3 L7.8,1.6 L14.3,9.3" fill="none" stroke="#8cb318" stroke-width="3"/></svg>
<svg class="a" style="left:340.4px;top:506.2px" width="15.6" height="19.5" viewBox="0 0 15.6 19.5"><path d="M7.8,0 V17.3 M1.3,10.2 L7.8,17.9 L14.3,10.2" fill="none" stroke="#f00a14" stroke-width="3"/></svg>
<div style="position:absolute;left:110.5px;top:612.1px;width:269.7px;height:4.5px;background:#333;"></div>
<div style="position:absolute;left:402.5px;top:612.1px;width:338.3px;height:4.5px;background:#333;"></div>
<div style="position:absolute;left:110.5px;top:686.9px;width:269.7px;height:4.4px;background:#333;"></div>
<div style="position:absolute;left:730.5px;top:620.7px;width:10.3px;height:379.6px;background:#f2f2f2;border-radius:5px;"></div>
<div style="position:absolute;left:730.5px;top:620.7px;width:10.3px;height:201.0px;background:#cdcdcd;border-radius:5px;"></div>
<div style="position:absolute;left:380.4px;top:1002.0px;width:349.5px;height:10.3px;background:#f2f2f2;border-radius:5px;"></div>
<div style="position:absolute;left:380.4px;top:1002.0px;width:143.3px;height:10.3px;background:#cdcdcd;border-radius:5px;"></div>
<div class="t" style="left:214.31px;top:468.21px;font:400 23.29px 'Liberation Sans', sans-serif;line-height:1;color:#404040;transform:scaleX(0.8906);">EMEA - Juices</div>
<div class="t" style="left:367.41px;top:465.29px;font:700 26.71px 'Liberation Sans', sans-serif;line-height:1;color:#333;transform:scaleX(0.9868);">109.8</div>
<div class="t" style="left:480.70px;top:468.21px;font:400 23.29px 'Liberation Sans', sans-serif;line-height:1;color:#404040;transform:scaleX(0.8599);">ΔAC1</div>
<div class="t" style="left:542.98px;top:468.21px;font:400 23.29px 'Liberation Sans', sans-serif;line-height:1;color:#8cb318;transform:scaleX(0.9175);">+5.1%</div>
<div class="t" style="left:366.50px;top:504.21px;font:400 23.29px 'Liberation Sans', sans-serif;line-height:1;color:#404040;transform:scaleX(0.8766);">ΔAC2</div>
<div class="t" style="left:427.89px;top:504.21px;font:400 23.29px 'Liberation Sans', sans-serif;line-height:1;color:#f00a14;transform:scaleX(0.9101);">-6.9%</div>
<div class="t" style="left:403.40px;top:567.94px;font:400 25.71px 'Liberation Sans', sans-serif;line-height:1;color:#252525;transform:scaleX(0.8992);">AC</div>
<div class="t" style="left:122.90px;top:645.85px;font:700 27.00px 'Liberation Sans', sans-serif;line-height:1;color:#252525;transform:scaleX(0.9576);">All</div>
<div class="t" style="left:122.90px;top:711.17px;font:400 26.86px 'Liberation Sans', sans-serif;line-height:1;color:#252525;transform:scaleX(0.9175);">January</div>
<div class="t" style="left:120.98px;top:764.97px;font:400 26.86px 'Liberation Sans', sans-serif;line-height:1;color:#252525;transform:scaleX(0.9618);">February</div>
<div class="t" style="left:120.87px;top:818.77px;font:400 26.86px 'Liberation Sans', sans-serif;line-height:1;color:#252525;transform:scaleX(1.0155);">March</div>
<div class="t" style="left:122.90px;top:872.57px;font:400 26.86px 'Liberation Sans', sans-serif;line-height:1;color:#252525;transform:scaleX(1.0083);">April</div>
<div class="t" style="left:120.92px;top:926.37px;font:400 26.86px 'Liberation Sans', sans-serif;line-height:1;color:#252525;transform:scaleX(0.9896);">May</div>
<div class="t" style="left:122.90px;top:980.17px;font:400 26.86px 'Liberation Sans', sans-serif;line-height:1;color:#252525;transform:scaleX(0.9109);">June</div>
<div class="a" style="left:380.4px;top:619.8px;width:350px;height:382px;overflow:hidden">
<div style="position:absolute;left:22.1px;top:67.1px;width:338.3px;height:4.4px;background:#333;"></div>
<div style="position:absolute;left:25.7px;top:76.3px;width:6.4px;height:313.7px;background:#2b2b2b;"></div>
<div style="position:absolute;left:23.0px;top:129.7px;width:9.1px;height:1.0px;background:#8a8a8a;"></div>
<div style="position:absolute;left:23.0px;top:183.5px;width:9.1px;height:1.0px;background:#8a8a8a;"></div>
<div style="position:absolute;left:23.0px;top:237.3px;width:9.1px;height:1.0px;background:#8a8a8a;"></div>
<div style="position:absolute;left:23.0px;top:291.1px;width:9.1px;height:1.0px;background:#8a8a8a;"></div>
<div style="position:absolute;left:23.0px;top:344.9px;width:9.1px;height:1.0px;background:#8a8a8a;"></div>
<div style="position:absolute;left:23.0px;top:398.7px;width:9.1px;height:1.0px;background:#8a8a8a;"></div>
<div style="position:absolute;left:32.1px;top:83.3px;width:203.3px;height:39.6px;background:#252525;"></div>
<div style="position:absolute;left:32.1px;top:137.1px;width:193.7px;height:39.6px;background:#252525;"></div>
<div style="position:absolute;left:32.1px;top:190.9px;width:305.3px;height:39.6px;background:#252525;"></div>
<div style="position:absolute;left:32.1px;top:244.7px;width:291.9px;height:39.6px;background:#252525;"></div>
<div style="position:absolute;left:32.1px;top:298.5px;width:291.3px;height:39.6px;background:#252525;"></div>
<div style="position:absolute;left:32.1px;top:352.3px;width:294.0px;height:39.6px;background:#252525;"></div>
<div class="t" style="left:328.68px;top:26.05px;font:700 27.00px 'Liberation Sans', sans-serif;line-height:1;color:#252525;transform:scaleX(0.9200);">109.8</div>
<div class="t" style="left:246.17px;top:90.51px;font:400 26.57px 'Liberation Sans', sans-serif;line-height:1;color:#252525;transform:scaleX(0.9300);">7.9</div>
<div class="t" style="left:236.57px;top:144.31px;font:400 26.57px 'Liberation Sans', sans-serif;line-height:1;color:#252525;transform:scaleX(0.9300);">7.6</div>
<div class="t" style="left:347.24px;top:198.11px;font:400 26.57px 'Liberation Sans', sans-serif;line-height:1;color:#252525;transform:scaleX(0.9300);">12.5</div>
<div class="t" style="left:333.84px;top:251.91px;font:400 26.57px 'Liberation Sans', sans-serif;line-height:1;color:#252525;transform:scaleX(0.9300);">11.4</div>
<div class="t" style="left:333.24px;top:305.71px;font:400 26.57px 'Liberation Sans', sans-serif;line-height:1;color:#252525;transform:scaleX(0.9300);">11.4</div>
<div class="t" style="left:335.94px;top:359.51px;font:400 26.57px 'Liberation Sans', sans-serif;line-height:1;color:#252525;transform:scaleX(0.9300);">11.5</div>
</div>
<svg class="a" style="left:1124.0px;top:470.2px" width="15.5" height="19.5" viewBox="0 0 15.5 19.5"><path d="M7.8,19.5 V2.2 M1.3,9.2 L7.8,1.6 L14.2,9.2" fill="none" stroke="#8cb318" stroke-width="3"/></svg>
<svg class="a" style="left:1027.4px;top:506.2px" width="16.3" height="19.5" viewBox="0 0 16.3 19.5"><path d="M8.1,0 V17.3 M1.3,9.9 L8.1,17.9 L15.0,9.9" fill="none" stroke="#f00a14" stroke-width="3"/></svg>
<div style="position:absolute;left:797.5px;top:612.1px;width:269.7px;height:4.5px;background:#333;"></div>
<div style="position:absolute;left:1089.5px;top:612.1px;width:338.3px;height:4.5px;background:#333;"></div>
<div style="position:absolute;left:797.5px;top:686.9px;width:269.7px;height:4.4px;background:#333;"></div>
<div style="position:absolute;left:1417.5px;top:620.7px;width:10.3px;height:379.6px;background:#f2f2f2;border-radius:5px;"></div>
<div style="position:absolute;left:1417.5px;top:620.7px;width:10.3px;height:201.0px;background:#cdcdcd;border-radius:5px;"></div>
<div style="position:absolute;left:1067.4px;top:1002.0px;width:349.5px;height:10.3px;background:#f2f2f2;border-radius:5px;"></div>
<div style="position:absolute;left:1067.4px;top:1002.0px;width:143.3px;height:10.3px;background:#cdcdcd;border-radius:5px;"></div>
<div class="t" style="left:907.80px;top:468.21px;font:400 23.29px 'Liberation Sans', sans-serif;line-height:1;color:#404040;transform:scaleX(0.8994);">EMEA - Soda</div>
<div class="t" style="left:1051.60px;top:465.29px;font:700 26.71px 'Liberation Sans', sans-serif;line-height:1;color:#333;transform:scaleX(0.9862);">93.5</div>
<div class="t" style="left:1151.00px;top:468.21px;font:400 23.29px 'Liberation Sans', sans-serif;line-height:1;color:#404040;transform:scaleX(0.8482);">ΔAC1</div>
<div class="t" style="left:1212.27px;top:468.21px;font:400 23.29px 'Liberation Sans', sans-serif;line-height:1;color:#8cb318;transform:scaleX(0.9255);">+18.3%</div>
<div class="t" style="left:1053.90px;top:504.21px;font:400 23.29px 'Liberation Sans', sans-serif;line-height:1;color:#404040;transform:scaleX(0.8832);">ΔAC2</div>
<div class="t" style="left:1114.89px;top:504.21px;font:400 23.29px 'Liberation Sans', sans-serif;line-height:1;color:#f00a14;transform:scaleX(0.9134);">-0.9%</div>
<div class="t" style="left:1090.40px;top:567.94px;font:400 25.71px 'Liberation Sans', sans-serif;line-height:1;color:#252525;transform:scaleX(0.8992);">AC</div>
<div class="t" style="left:809.90px;top:645.85px;font:700 27.00px 'Liberation Sans', sans-serif;line-height:1;color:#252525;transform:scaleX(0.9576);">All</div>
<div class="t" style="left:809.90px;top:711.17px;font:400 26.86px 'Liberation Sans', sans-serif;line-height:1;color:#252525;transform:scaleX(0.9175);">January</div>
<div class="t" style="left:807.98px;top:764.97px;font:400 26.86px 'Liberation Sans', sans-serif;line-height:1;color:#252525;transform:scaleX(0.9618);">February</div>
<div class="t" style="left:807.87px;top:818.77px;font:400 26.86px 'Liberation Sans', sans-serif;line-height:1;color:#252525;transform:scaleX(1.0155);">March</div>
<div class="t" style="left:809.90px;top:872.57px;font:400 26.86px 'Liberation Sans', sans-serif;line-height:1;color:#252525;transform:scaleX(1.0083);">April</div>
<div class="t" style="left:807.92px;top:926.37px;font:400 26.86px 'Liberation Sans', sans-serif;line-height:1;color:#252525;transform:scaleX(0.9896);">May</div>
<div class="t" style="left:809.90px;top:980.17px;font:400 26.86px 'Liberation Sans', sans-serif;line-height:1;color:#252525;transform:scaleX(0.9109);">June</div>
<div class="a" style="left:1067.4px;top:619.8px;width:350px;height:382px;overflow:hidden">
<div style="position:absolute;left:22.1px;top:67.1px;width:338.3px;height:4.4px;background:#333;"></div>
<div style="position:absolute;left:25.7px;top:76.3px;width:6.4px;height:313.7px;background:#2b2b2b;"></div>
<div style="position:absolute;left:23.0px;top:129.7px;width:9.1px;height:1.0px;background:#8a8a8a;"></div>
<div style="position:absolute;left:23.0px;top:183.5px;width:9.1px;height:1.0px;background:#8a8a8a;"></div>
<div style="position:absolute;left:23.0px;top:237.3px;width:9.1px;height:1.0px;background:#8a8a8a;"></div>
<div style="position:absolute;left:23.0px;top:291.1px;width:9.1px;height:1.0px;background:#8a8a8a;"></div>
<div style="position:absolute;left:23.0px;top:344.9px;width:9.1px;height:1.0px;background:#8a8a8a;"></div>
<div style="position:absolute;left:23.0px;top:398.7px;width:9.1px;height:1.0px;background:#8a8a8a;"></div>
</div>
<svg class="a" style="left:1865.6px;top:470.2px" width="16.2" height="19.5" viewBox="0 0 16.2 19.5"><path d="M8.1,0 V17.3 M1.3,9.9 L8.1,17.9 L14.9,9.9" fill="none" stroke="#f00a14" stroke-width="3"/></svg>
<svg class="a" style="left:1714.8px;top:506.2px" width="16.2" height="19.5" viewBox="0 0 16.2 19.5"><path d="M8.1,0 V17.3 M1.3,9.9 L8.1,17.9 L14.9,9.9" fill="none" stroke="#f00a14" stroke-width="3"/></svg>
<div style="position:absolute;left:1484.5px;top:612.1px;width:269.7px;height:4.5px;background:#333;"></div>
<div style="position:absolute;left:1776.5px;top:612.1px;width:338.3px;height:4.5px;background:#333;"></div>
<div style="position:absolute;left:1484.5px;top:686.9px;width:269.7px;height:4.4px;background:#333;"></div>
<div style="position:absolute;left:2104.5px;top:620.7px;width:10.3px;height:379.6px;background:#f2f2f2;border-radius:5px;"></div>
<div style="position:absolute;left:2104.5px;top:620.7px;width:10.3px;height:201.0px;background:#cdcdcd;border-radius:5px;"></div>
<div style="position:absolute;left:1754.4px;top:1002.0px;width:349.5px;height:10.3px;background:#f2f2f2;border-radius:5px;"></div>
<div style="position:absolute;left:1754.4px;top:1002.0px;width:143.3px;height:10.3px;background:#cdcdcd;border-radius:5px;"></div>
<div class="t" style="left:1558.66px;top:468.21px;font:400 23.29px 'Liberation Sans', sans-serif;line-height:1;color:#404040;transform:scaleX(0.9428);">EMEA - Mineral Water</div>
<div class="t" style="left:1792.70px;top:465.29px;font:700 26.71px 'Liberation Sans', sans-serif;line-height:1;color:#333;transform:scaleX(1.0092);">63.4</div>
<div class="t" style="left:1892.00px;top:468.21px;font:400 23.29px 'Liberation Sans', sans-serif;line-height:1;color:#404040;transform:scaleX(0.8799);">ΔAC1</div>
<div class="t" style="left:1953.10px;top:468.21px;font:400 23.29px 'Liberation Sans', sans-serif;line-height:1;color:#f00a14;transform:scaleX(0.9050);">-2.6%</div>
<div class="t" style="left:1740.80px;top:504.21px;font:400 23.29px 'Liberation Sans', sans-serif;line-height:1;color:#404040;transform:scaleX(0.8799);">ΔAC2</div>
<div class="t" style="left:1801.87px;top:504.21px;font:400 23.29px 'Liberation Sans', sans-serif;line-height:1;color:#f00a14;transform:scaleX(0.9253);">-5.2%</div>
<div class="t" style="left:1777.40px;top:567.94px;font:400 25.71px 'Liberation Sans', sans-serif;line-height:1;color:#252525;transform:scaleX(0.8992);">AC</div>
<div class="t" style="left:1496.90px;top:645.85px;font:700 27.00px 'Liberation Sans', sans-serif;line-height:1;color:#252525;transform:scaleX(0.9576);">All</div>
<div class="t" style="left:1496.90px;top:711.17px;font:400 26.86px 'Liberation Sans', sans-serif;line-height:1;color:#252525;transform:scaleX(0.9175);">January</div>
<div class="t" style="left:1494.98px;top:764.97px;font:400 26.86px 'Liberation Sans', sans-serif;line-height:1;color:#252525;transform:scaleX(0.9618);">February</div>
<div class="t" style="left:1494.87px;top:818.77px;font:400 26.86px 'Liberation Sans', sans-serif;line-height:1;color:#252525;transform:scaleX(1.0155);">March</div>
<div class="t" style="left:1496.90px;top:872.57px;font:400 26.86px 'Liberation Sans', sans-serif;line-height:1;color:#252525;transform:scaleX(1.0083);">April</div>
<div class="t" style="left:1494.92px;top:926.37px;font:400 26.86px 'Liberation Sans', sans-serif;line-height:1;color:#252525;transform:scaleX(0.9896);">May</div>
<div class="t" style="left:1496.90px;top:980.17px;font:400 26.86px 'Liberation Sans', sans-serif;line-height:1;color:#252525;transform:scaleX(0.9109);">June</div>
<div class="a" style="left:1754.4px;top:619.8px;width:350px;height:382px;overflow:hidden">
<div style="position:absolute;left:22.1px;top:67.1px;width:338.3px;height:4.4px;background:#333;"></div>
<div style="position:absolute;left:25.7px;top:76.3px;width:6.4px;height:313.7px;background:#2b2b2b;"></div>
<div style="position:absolute;left:23.0px;top:129.7px;width:9.1px;height:1.0px;background:#8a8a8a;"></div>
<div style="position:absolute;left:23.0px;top:183.5px;width:9.1px;height:1.0px;background:#8a8a8a;"></div>
<div style="position:absolute;left:23.0px;top:237.3px;width:9.1px;height:1.0px;background:#8a8a8a;"></div>
<div style="position:absolute;left:23.0px;top:291.1px;width:9.1px;height:1.0px;background:#8a8a8a;"></div>
<div style="position:absolute;left:23.0px;top:344.9px;width:9.1px;height:1.0px;background:#8a8a8a;"></div>
<div style="position:absolute;left:23.0px;top:398.7px;width:9.1px;height:1.0px;background:#8a8a8a;"></div>
<div style="position:absolute;left:32.1px;top:83.3px;width:203.5px;height:39.6px;background:#252525;"></div>
<div style="position:absolute;left:32.1px;top:137.1px;width:219.0px;height:39.6px;background:#252525;"></div>
<div style="position:absolute;left:32.1px;top:190.9px;width:252.2px;height:39.6px;background:#252525;"></div>
<div style="position:absolute;left:32.1px;top:244.7px;width:220.2px;height:39.6px;background:#252525;"></div>
<div style="position:absolute;left:32.1px;top:298.5px;width:234.4px;height:39.6px;background:#252525;"></div>
<div style="position:absolute;left:32.1px;top:352.3px;width:255.5px;height:39.6px;background:#252525;"></div>
<div class="t" style="left:330.10px;top:26.05px;font:700 27.00px 'Liberation Sans', sans-serif;line-height:1;color:#252525;transform:scaleX(0.9200);">63.4</div>
<div class="t" style="left:247.30px;top:90.51px;font:400 26.57px 'Liberation Sans', sans-serif;line-height:1;color:#252525;transform:scaleX(0.9300);">4.6</div>
<div class="t" style="left:262.80px;top:144.31px;font:400 26.57px 'Liberation Sans', sans-serif;line-height:1;color:#252525;transform:scaleX(0.9300);">4.9</div>
<div class="t" style="left:295.07px;top:198.11px;font:400 26.57px 'Liberation Sans', sans-serif;line-height:1;color:#252525;transform:scaleX(0.9300);">5.7</div>
<div class="t" style="left:263.07px;top:251.91px;font:400 26.57px 'Liberation Sans', sans-serif;line-height:1;color:#252525;transform:scaleX(0.9300);">5.0</div>
<div class="t" style="left:277.27px;top:305.71px;font:400 26.57px 'Liberation Sans', sans-serif;line-height:1;color:#252525;transform:scaleX(0.9300);">5.3</div>
<div class="t" style="left:298.37px;top:359.51px;font:400 26.57px 'Liberation Sans', sans-serif;line-height:1;color:#252525;transform:scaleX(0.9300);">5.8</div>
</div>
<svg class="a" style="left:2542.7px;top:470.2px" width="17.0" height="19.5" viewBox="0 0 17.0 19.5"><path d="M8.5,19.5 V2.2 M1.3,10.0 L8.5,1.6 L15.7,10.0" fill="none" stroke="#8cb318" stroke-width="3"/></svg>
<svg class="a" style="left:2392.6px;top:506.2px" width="15.2" height="19.5" viewBox="0 0 15.2 19.5"><path d="M7.6,19.5 V2.2 M1.3,9.1 L7.6,1.6 L13.9,9.1" fill="none" stroke="#8cb318" stroke-width="3"/></svg>
<div style="position:absolute;left:2171.5px;top:612.1px;width:269.7px;height:4.5px;background:#333;"></div>
<div style="position:absolute;left:2463.5px;top:612.1px;width:338.3px;height:4.5px;background:#333;"></div>
<div style="position:absolute;left:2171.5px;top:686.9px;width:269.7px;height:4.4px;background:#333;"></div>
<div style="position:absolute;left:2791.5px;top:620.7px;width:10.3px;height:379.6px;background:#f2f2f2;border-radius:5px;"></div>
<div style="position:absolute;left:2791.5px;top:620.7px;width:10.3px;height:201.0px;background:#cdcdcd;border-radius:5px;"></div>
<div style="position:absolute;left:2441.4px;top:1002.0px;width:349.5px;height:10.3px;background:#f2f2f2;border-radius:5px;"></div>
<div style="position:absolute;left:2441.4px;top:1002.0px;width:143.3px;height:10.3px;background:#cdcdcd;border-radius:5px;"></div>
<div class="t" style="left:2248.57px;top:468.21px;font:400 23.29px 'Liberation Sans', sans-serif;line-height:1;color:#404040;transform:scaleX(0.9342);">EMEA - Tea &amp; Coffee</div>
<div class="t" style="left:2471.70px;top:465.29px;font:700 26.71px 'Liberation Sans', sans-serif;line-height:1;color:#333;transform:scaleX(0.9689);">31.1</div>
<div class="t" style="left:2570.00px;top:468.21px;font:400 23.29px 'Liberation Sans', sans-serif;line-height:1;color:#404040;transform:scaleX(0.8649);">ΔAC1</div>
<div class="t" style="left:2631.06px;top:468.21px;font:400 23.29px 'Liberation Sans', sans-serif;line-height:1;color:#8cb318;transform:scaleX(0.9360);">+2.1%</div>
<div class="t" style="left:2419.00px;top:504.21px;font:400 23.29px 'Liberation Sans', sans-serif;line-height:1;color:#404040;transform:scaleX(0.8799);">ΔAC2</div>
<div class="t" style="left:2481.69px;top:504.21px;font:400 23.29px 'Liberation Sans', sans-serif;line-height:1;color:#8cb318;transform:scaleX(0.9139);">+15.1%</div>
<div class="t" style="left:2464.40px;top:567.94px;font:400 25.71px 'Liberation Sans', sans-serif;line-height:1;color:#252525;transform:scaleX(0.8992);">AC</div>
<div class="t" style="left:2183.90px;top:645.85px;font:700 27.00px 'Liberation Sans', sans-serif;line-height:1;color:#252525;transform:scaleX(0.9576);">All</div>
<div class="t" style="left:2183.90px;top:711.17px;font:400 26.86px 'Liberation Sans', sans-serif;line-height:1;color:#252525;transform:scaleX(0.9175);">January</div>
<div class="t" style="left:2181.98px;top:764.97px;font:400 26.86px 'Liberation Sans', sans-serif;line-height:1;color:#252525;transform:scaleX(0.9618);">February</div>
<div class="t" style="left:2181.87px;top:818.77px;font:400 26.86px 'Liberation Sans', sans-serif;line-height:1;color:#252525;transform:scaleX(1.0155);">March</div>
<div class="t" style="left:2183.90px;top:872.57px;font:400 26.86px 'Liberation Sans', sans-serif;line-height:1;color:#252525;transform:scaleX(1.0083);">April</div>
<div class="t" style="left:2181.92px;top:926.37px;font:400 26.86px 'Liberation Sans', sans-serif;line-height:1;color:#252525;transform:scaleX(0.9896);">May</div>
<div class="t" style="left:2183.90px;top:980.17px;font:400 26.86px 'Liberation Sans', sans-serif;line-height:1;color:#252525;transform:scaleX(0.9109);">June</div>
<div class="a" style="left:2441.4px;top:619.8px;width:350px;height:382px;overflow:hidden">
<div style="position:absolute;left:22.1px;top:67.1px;width:338.3px;height:4.4px;background:#333;"></div>
<div style="position:absolute;left:25.7px;top:76.3px;width:6.4px;height:313.7px;background:#2b2b2b;"></div>
<div style="position:absolute;left:23.0px;top:129.7px;width:9.1px;height:1.0px;background:#8a8a8a;"></div>
<div style="position:absolute;left:23.0px;top:183.5px;width:9.1px;height:1.0px;background:#8a8a8a;"></div>
<div style="position:absolute;left:23.0px;top:237.3px;width:9.1px;height:1.0px;background:#8a8a8a;"></div>
<div style="position:absolute;left:23.0px;top:291.1px;width:9.1px;height:1.0px;background:#8a8a8a;"></div>
<div style="position:absolute;left:23.0px;top:344.9px;width:9.1px;height:1.0px;background:#8a8a8a;"></div>
<div style="position:absolute;left:23.0px;top:398.7px;width:9.1px;height:1.0px;background:#8a8a8a;"></div>
<div style="position:absolute;left:32.1px;top:83.3px;width:186.5px;height:39.6px;background:#252525;"></div>
<div style="position:absolute;left:32.1px;top:137.1px;width:105.5px;height:39.6px;background:#252525;"></div>
<div style="position:absolute;left:32.1px;top:190.9px;width:83.9px;height:39.6px;background:#252525;"></div>
<div style="position:absolute;left:32.1px;top:244.7px;width:168.0px;height:39.6px;background:#252525;"></div>
<div style="position:absolute;left:32.1px;top:298.5px;width:213.8px;height:39.6px;background:#252525;"></div>
<div style="position:absolute;left:32.1px;top:352.3px;width:306.5px;height:39.6px;background:#252525;"></div>
<div class="t" style="left:330.00px;top:26.05px;font:700 27.00px 'Liberation Sans', sans-serif;line-height:1;color:#252525;transform:scaleX(0.9200);">31.1</div>
<div class="t" style="left:229.37px;top:90.51px;font:400 26.57px 'Liberation Sans', sans-serif;line-height:1;color:#252525;transform:scaleX(0.9300);">2.7</div>
<div class="t" style="left:147.44px;top:144.31px;font:400 26.57px 'Liberation Sans', sans-serif;line-height:1;color:#252525;transform:scaleX(0.9300);">1.5</div>
<div class="t" style="left:125.84px;top:198.11px;font:400 26.57px 'Liberation Sans', sans-serif;line-height:1;color:#252525;transform:scaleX(0.9300);">1.2</div>
<div class="t" style="left:210.87px;top:251.91px;font:400 26.57px 'Liberation Sans', sans-serif;line-height:1;color:#252525;transform:scaleX(0.9300);">2.4</div>
<div class="t" style="left:256.67px;top:305.71px;font:400 26.57px 'Liberation Sans', sans-serif;line-height:1;color:#252525;transform:scaleX(0.9300);">3.0</div>
<div class="t" style="left:350.30px;top:359.51px;font:400 26.57px 'Liberation Sans', sans-serif;line-height:1;color:#252525;transform:scaleX(0.9300);">4.6</div>
</div>
<svg class="a" style="left:431.4px;top:1038.7px" width="16.2" height="19.5" viewBox="0 0 16.2 19.5"><path d="M8.1,19.5 V2.2 M1.3,9.6 L8.1,1.6 L14.9,9.6" fill="none" stroke="#8cb318" stroke-width="3"/></svg>
<svg class="a" style="left:334.5px;top:1073.7px" width="16.2" height="19.5" viewBox="0 0 16.2 19.5"><path d="M8.1,0 V17.3 M1.3,9.9 L8.1,17.9 L14.9,9.9" fill="none" stroke="#f00a14" stroke-width="3"/></svg>
<div style="position:absolute;left:110.5px;top:1181.4px;width:269.7px;height:4.5px;background:#333;"></div>
<div style="position:absolute;left:402.5px;top:1181.4px;width:338.3px;height:4.5px;background:#333;"></div>
<div style="position:absolute;left:110.5px;top:1254.1px;width:269.7px;height:4.4px;background:#333;"></div>
<div style="position:absolute;left:730.5px;top:1190.7px;width:10.3px;height:379.1px;background:#f2f2f2;border-radius:5px;"></div>
<div style="position:absolute;left:730.5px;top:1190.7px;width:10.3px;height:200.5px;background:#cdcdcd;border-radius:5px;"></div>
<div style="position:absolute;left:380.4px;top:1571.3px;width:349.5px;height:10.3px;background:#f2f2f2;border-radius:5px;"></div>
<div style="position:absolute;left:380.4px;top:1571.3px;width:143.3px;height:10.3px;background:#cdcdcd;border-radius:5px;"></div>
<div class="t" style="left:224.41px;top:1036.71px;font:400 23.29px 'Liberation Sans', sans-serif;line-height:1;color:#404040;transform:scaleX(0.8942);">East - Juices</div>
<div class="t" style="left:359.20px;top:1033.79px;font:700 26.71px 'Liberation Sans', sans-serif;line-height:1;color:#333;transform:scaleX(1.0231);">99.7</div>
<div class="t" style="left:459.00px;top:1036.71px;font:400 23.29px 'Liberation Sans', sans-serif;line-height:1;color:#404040;transform:scaleX(0.8515);">ΔAC1</div>
<div class="t" style="left:519.77px;top:1036.71px;font:400 23.29px 'Liberation Sans', sans-serif;line-height:1;color:#8cb318;transform:scaleX(0.9280);">+19.5%</div>
<div class="t" style="left:360.00px;top:1071.71px;font:400 23.29px 'Liberation Sans', sans-serif;line-height:1;color:#404040;transform:scaleX(0.8883);">ΔAC2</div>
<div class="t" style="left:421.07px;top:1071.71px;font:400 23.29px 'Liberation Sans', sans-serif;line-height:1;color:#f00a14;transform:scaleX(0.9269);">-10.2%</div>
<div class="t" style="left:403.40px;top:1135.94px;font:400 25.71px 'Liberation Sans', sans-serif;line-height:1;color:#252525;transform:scaleX(0.8992);">AC</div>
<div class="t" style="left:122.90px;top:1214.35px;font:700 27.00px 'Liberation Sans', sans-serif;line-height:1;color:#252525;transform:scaleX(0.9576);">All</div>
<div class="t" style="left:122.90px;top:1278.37px;font:400 26.86px 'Liberation Sans', sans-serif;line-height:1;color:#252525;transform:scaleX(0.9175);">January</div>
<div class="t" style="left:120.98px;top:1332.17px;font:400 26.86px 'Liberation Sans', sans-serif;line-height:1;color:#252525;transform:scaleX(0.9618);">February</div>
<div class="t" style="left:120.87px;top:1385.97px;font:400 26.86px 'Liberation Sans', sans-serif;line-height:1;color:#252525;transform:scaleX(1.0155);">March</div>
<div class="t" style="left:122.90px;top:1439.77px;font:400 26.86px 'Liberation Sans', sans-serif;line-height:1;color:#252525;transform:scaleX(1.0083);">April</div>
<div class="t" style="left:120.92px;top:1493.57px;font:400 26.86px 'Liberation Sans', sans-serif;line-height:1;color:#252525;transform:scaleX(0.9896);">May</div>
<div class="t" style="left:122.90px;top:1547.37px;font:400 26.86px 'Liberation Sans', sans-serif;line-height:1;color:#252525;transform:scaleX(0.9109);">June</div>
<div class="a" style="left:380.4px;top:1188.3px;width:350px;height:382px;overflow:hidden">
<div style="position:absolute;left:22.1px;top:65.8px;width:338.3px;height:4.4px;background:#333;"></div>
<div style="position:absolute;left:25.7px;top:75.0px;width:6.4px;height:315.0px;background:#2b2b2b;"></div>
<div style="position:absolute;left:23.0px;top:128.4px;width:9.1px;height:1.0px;background:#8a8a8a;"></div>
<div style="position:absolute;left:23.0px;top:182.2px;width:9.1px;height:1.0px;background:#8a8a8a;"></div>
<div style="position:absolute;left:23.0px;top:236.0px;width:9.1px;height:1.0px;background:#8a8a8a;"></div>
<div style="position:absolute;left:23.0px;top:289.8px;width:9.1px;height:1.0px;background:#8a8a8a;"></div>
<div style="position:absolute;left:23.0px;top:343.6px;width:9.1px;height:1.0px;background:#8a8a8a;"></div>
<div style="position:absolute;left:23.0px;top:397.4px;width:9.1px;height:1.0px;background:#8a8a8a;"></div>
<div style="position:absolute;left:32.1px;top:82.0px;width:114.5px;height:39.6px;background:#252525;"></div>
<div style="position:absolute;left:32.1px;top:135.8px;width:169.8px;height:39.6px;background:#252525;"></div>
<div style="position:absolute;left:32.1px;top:189.6px;width:305.8px;height:39.6px;background:#252525;"></div>
<div style="position:absolute;left:32.1px;top:243.4px;width:198.3px;height:39.6px;background:#252525;"></div>
<div style="position:absolute;left:32.1px;top:297.2px;width:186.0px;height:39.6px;background:#252525;"></div>
<div style="position:absolute;left:32.1px;top:351.0px;width:214.3px;height:39.6px;background:#252525;"></div>
<div class="t" style="left:344.30px;top:26.05px;font:700 27.00px 'Liberation Sans', sans-serif;line-height:1;color:#252525;transform:scaleX(0.9200);">99.7</div>
<div class="t" style="left:157.37px;top:89.21px;font:400 26.57px 'Liberation Sans', sans-serif;line-height:1;color:#252525;transform:scaleX(0.9300);">5.7</div>
<div class="t" style="left:212.67px;top:143.01px;font:400 26.57px 'Liberation Sans', sans-serif;line-height:1;color:#252525;transform:scaleX(0.9300);">8.4</div>
<div class="t" style="left:347.74px;top:196.81px;font:400 26.57px 'Liberation Sans', sans-serif;line-height:1;color:#252525;transform:scaleX(0.9300);">15.1</div>
<div class="t" style="left:241.17px;top:250.61px;font:400 26.57px 'Liberation Sans', sans-serif;line-height:1;color:#252525;transform:scaleX(0.9300);">9.8</div>
<div class="t" style="left:228.87px;top:304.41px;font:400 26.57px 'Liberation Sans', sans-serif;line-height:1;color:#252525;transform:scaleX(0.9300);">9.2</div>
<div class="t" style="left:256.24px;top:358.21px;font:400 26.57px 'Liberation Sans', sans-serif;line-height:1;color:#252525;transform:scaleX(0.9300);">10.5</div>
</div>
<svg class="a" style="left:1021.4px;top:1073.7px" width="16.1" height="19.5" viewBox="0 0 16.1 19.5"><path d="M8.1,0 V17.3 M1.3,9.9 L8.1,17.9 L14.8,9.9" fill="none" stroke="#f00a14" stroke-width="3"/></svg>
<div style="position:absolute;left:797.5px;top:1181.4px;width:269.7px;height:4.5px;background:#333;"></div>
<div style="position:absolute;left:1089.5px;top:1181.4px;width:338.3px;height:4.5px;background:#333;"></div>
<div style="position:absolute;left:797.5px;top:1254.1px;width:269.7px;height:4.4px;background:#333;"></div>
<div style="position:absolute;left:1417.5px;top:1190.7px;width:10.3px;height:379.1px;background:#f2f2f2;border-radius:5px;"></div>
<div style="position:absolute;left:1417.5px;top:1190.7px;width:10.3px;height:200.5px;background:#cdcdcd;border-radius:5px;"></div>
<div style="position:absolute;left:1067.4px;top:1571.3px;width:349.5px;height:10.3px;background:#f2f2f2;border-radius:5px;"></div>
<div style="position:absolute;left:1067.4px;top:1571.3px;width:143.3px;height:10.3px;background:#cdcdcd;border-radius:5px;"></div>
<div class="t" style="left:919.70px;top:1036.71px;font:400 23.29px 'Liberation Sans', sans-serif;line-height:1;color:#404040;transform:scaleX(0.8989);">East - Soda</div>
<div class="t" style="left:1046.00px;top:1033.79px;font:700 26.71px 'Liberation Sans', sans-serif;line-height:1;color:#333;transform:scaleX(1.0092);">65.5</div>
<div class="t" style="left:1047.80px;top:1071.71px;font:400 23.29px 'Liberation Sans', sans-serif;line-height:1;color:#404040;transform:scaleX(0.8799);">ΔAC2</div>
<div class="t" style="left:1090.40px;top:1135.94px;font:400 25.71px 'Liberation Sans', sans-serif;line-height:1;color:#252525;transform:scaleX(0.8992);">AC</div>
<div class="t" style="left:809.90px;top:1214.35px;font:700 27.00px 'Liberation Sans', sans-serif;line-height:1;color:#252525;transform:scaleX(0.9576);">All</div>
<div class="t" style="left:809.90px;top:1278.37px;font:400 26.86px 'Liberation Sans', sans-serif;line-height:1;color:#252525;transform:scaleX(0.9175);">January</div>
<div class="t" style="left:807.98px;top:1332.17px;font:400 26.86px 'Liberation Sans', sans-serif;line-height:1;color:#252525;transform:scaleX(0.9618);">February</div>
<div class="t" style="left:807.87px;top:1385.97px;font:400 26.86px 'Liberation Sans', sans-serif;line-height:1;color:#252525;transform:scaleX(1.0155);">March</div>
<div class="t" style="left:809.90px;top:1439.77px;font:400 26.86px 'Liberation Sans', sans-serif;line-height:1;color:#252525;transform:scaleX(1.0083);">April</div>
<div class="t" style="left:807.92px;top:1493.57px;font:400 26.86px 'Liberation Sans', sans-serif;line-height:1;color:#252525;transform:scaleX(0.9896);">May</div>
<div class="t" style="left:809.90px;top:1547.37px;font:400 26.86px 'Liberation Sans', sans-serif;line-height:1;color:#252525;transform:scaleX(0.9109);">June</div>
<div class="a" style="left:1067.4px;top:1188.3px;width:350px;height:382px;overflow:hidden">
<div style="position:absolute;left:22.1px;top:65.8px;width:338.3px;height:4.4px;background:#333;"></div>
<div style="position:absolute;left:25.7px;top:75.0px;width:6.4px;height:315.0px;background:#2b2b2b;"></div>
<div style="position:absolute;left:23.0px;top:128.4px;width:9.1px;height:1.0px;background:#8a8a8a;"></div>
<div style="position:absolute;left:23.0px;top:182.2px;width:9.1px;height:1.0px;background:#8a8a8a;"></div>
<div style="position:absolute;left:23.0px;top:236.0px;width:9.1px;height:1.0px;background:#8a8a8a;"></div>
<div style="position:absolute;left:23.0px;top:289.8px;width:9.1px;height:1.0px;background:#8a8a8a;"></div>
<div style="position:absolute;left:23.0px;top:343.6px;width:9.1px;height:1.0px;background:#8a8a8a;"></div>
<div style="position:absolute;left:23.0px;top:397.4px;width:9.1px;height:1.0px;background:#8a8a8a;"></div>
<div style="position:absolute;left:32.1px;top:82.0px;width:262.3px;height:39.6px;background:#252525;"></div>
<div style="position:absolute;left:32.1px;top:135.8px;width:99.5px;height:39.6px;background:#252525;"></div>
<div style="position:absolute;left:32.1px;top:189.6px;width:258.9px;height:39.6px;background:#252525;"></div>
<div style="position:absolute;left:32.1px;top:243.4px;width:276.8px;height:39.6px;background:#252525;"></div>
<div style="position:absolute;left:32.1px;top:297.2px;width:178.1px;height:39.6px;background:#252525;"></div>
<div style="position:absolute;left:32.1px;top:351.0px;width:143.3px;height:39.6px;background:#252525;"></div>
<div class="t" style="left:329.30px;top:26.05px;font:700 27.00px 'Liberation Sans', sans-serif;line-height:1;color:#252525;transform:scaleX(0.9200);">65.5</div>
<div class="t" style="left:305.17px;top:89.21px;font:400 26.57px 'Liberation Sans', sans-serif;line-height:1;color:#252525;transform:scaleX(0.9300);">6.6</div>
<div class="t" style="left:142.37px;top:143.01px;font:400 26.57px 'Liberation Sans', sans-serif;line-height:1;color:#252525;transform:scaleX(0.9300);">2.5</div>
<div class="t" style="left:301.77px;top:196.81px;font:400 26.57px 'Liberation Sans', sans-serif;line-height:1;color:#252525;transform:scaleX(0.9300);">6.5</div>
<div class="t" style="left:319.67px;top:250.61px;font:400 26.57px 'Liberation Sans', sans-serif;line-height:1;color:#252525;transform:scaleX(0.9300);">7.0</div>
<div class="t" style="left:221.90px;top:304.41px;font:400 26.57px 'Liberation Sans', sans-serif;line-height:1;color:#252525;transform:scaleX(0.9300);">4.5</div>
<div class="t" style="left:186.17px;top:358.21px;font:400 26.57px 'Liberation Sans', sans-serif;line-height:1;color:#252525;transform:scaleX(0.9300);">3.6</div>
</div>
<div style="position:absolute;left:1484.5px;top:1181.4px;width:269.7px;height:4.5px;background:#333;"></div>
<div style="position:absolute;left:1776.5px;top:1181.4px;width:338.3px;height:4.5px;background:#333;"></div>
<div style="position:absolute;left:1484.5px;top:1254.1px;width:269.7px;height:4.4px;background:#333;"></div>
<div style="position:absolute;left:2104.5px;top:1190.7px;width:10.3px;height:379.1px;background:#f2f2f2;border-radius:5px;"></div>
<div style="position:absolute;left:2104.5px;top:1190.7px;width:10.3px;height:200.5px;background:#cdcdcd;border-radius:5px;"></div>
<div style="position:absolute;left:1754.4px;top:1571.3px;width:349.5px;height:10.3px;background:#f2f2f2;border-radius:5px;"></div>
<div style="position:absolute;left:1754.4px;top:1571.3px;width:143.3px;height:10.3px;background:#cdcdcd;border-radius:5px;"></div>
<div class="t" style="left:1878.00px;top:1036.71px;font:400 23.29px 'Liberation Sans', sans-serif;line-height:1;color:#404040;transform:scaleX(0.8766);">ΔAC1</div>
<div class="t" style="left:1941.87px;top:1036.71px;font:400 23.29px 'Liberation Sans', sans-serif;line-height:1;color:#8cb318;transform:scaleX(0.9283);">+1.9%</div>
<div class="t" style="left:1777.40px;top:1135.94px;font:400 25.71px 'Liberation Sans', sans-serif;line-height:1;color:#252525;transform:scaleX(0.8992);">AC</div>
<div class="t" style="left:1496.90px;top:1214.35px;font:700 27.00px 'Liberation Sans', sans-serif;line-height:1;color:#252525;transform:scaleX(0.9576);">All</div>
<div class="t" style="left:1496.90px;top:1278.37px;font:400 26.86px 'Liberation Sans', sans-serif;line-height:1;color:#252525;transform:scaleX(0.9175);">January</div>
<div class="t" style="left:1494.98px;top:1332.17px;font:400 26.86px 'Liberation Sans', sans-serif;line-height:1;color:#252525;transform:scaleX(0.9618);">February</div>
<div class="t" style="left:1494.87px;top:1385.97px;font:400 26.86px 'Liberation Sans', sans-serif;line-height:1;color:#252525;transform:scaleX(1.0155);">March</div>
<div class="t" style="left:1496.90px;top:1439.77px;font:400 26.86px 'Liberation Sans', sans-serif;line-height:1;color:#252525;transform:scaleX(1.0083);">April</div>
<div class="t" style="left:1494.92px;top:1493.57px;font:400 26.86px 'Liberation Sans', sans-serif;line-height:1;color:#252525;transform:scaleX(0.9896);">May</div>
<div class="t" style="left:1496.90px;top:1547.37px;font:400 26.86px 'Liberation Sans', sans-serif;line-height:1;color:#252525;transform:scaleX(0.9109);">June</div>
<div class="a" style="left:1754.4px;top:1188.3px;width:350px;height:382px;overflow:hidden">
<div style="position:absolute;left:22.1px;top:65.8px;width:338.3px;height:4.4px;background:#333;"></div>
<div style="position:absolute;left:25.7px;top:75.0px;width:6.4px;height:315.0px;background:#2b2b2b;"></div>
<div style="position:absolute;left:23.0px;top:128.4px;width:9.1px;height:1.0px;background:#8a8a8a;"></div>
<div style="position:absolute;left:23.0px;top:182.2px;width:9.1px;height:1.0px;background:#8a8a8a;"></div>
<div style="position:absolute;left:23.0px;top:236.0px;width:9.1px;height:1.0px;background:#8a8a8a;"></div>
<div style="position:absolute;left:23.0px;top:289.8px;width:9.1px;height:1.0px;background:#8a8a8a;"></div>
<div style="position:absolute;left:23.0px;top:343.6px;width:9.1px;height:1.0px;background:#8a8a8a;"></div>
<div style="position:absolute;left:23.0px;top:397.4px;width:9.1px;height:1.0px;background:#8a8a8a;"></div>
<div style="position:absolute;left:32.1px;top:82.0px;width:220.0px;height:39.6px;background:#252525;"></div>
<div style="position:absolute;left:32.1px;top:135.8px;width:231.5px;height:39.6px;background:#252525;"></div>
<div style="position:absolute;left:32.1px;top:189.6px;width:232.3px;height:39.6px;background:#252525;"></div>
<div style="position:absolute;left:32.1px;top:243.4px;width:236.5px;height:39.6px;background:#252525;"></div>
<div style="position:absolute;left:32.1px;top:297.2px;width:239.1px;height:39.6px;background:#252525;"></div>
<div style="position:absolute;left:32.1px;top:351.0px;width:306.3px;height:39.6px;background:#252525;"></div>
<div class="t" style="left:330.30px;top:26.05px;font:700 27.00px 'Liberation Sans', sans-serif;line-height:1;color:#252525;transform:scaleX(0.9200);">67.9</div>
<div class="t" style="left:262.87px;top:89.21px;font:400 26.57px 'Liberation Sans', sans-serif;line-height:1;color:#252525;transform:scaleX(0.9300);">5.3</div>
<div class="t" style="left:274.37px;top:143.01px;font:400 26.57px 'Liberation Sans', sans-serif;line-height:1;color:#252525;transform:scaleX(0.9300);">5.5</div>
<div class="t" style="left:275.17px;top:196.81px;font:400 26.57px 'Liberation Sans', sans-serif;line-height:1;color:#252525;transform:scaleX(0.9300);">5.5</div>
<div class="t" style="left:279.37px;top:250.61px;font:400 26.57px 'Liberation Sans', sans-serif;line-height:1;color:#252525;transform:scaleX(0.9300);">5.7</div>
<div class="t" style="left:281.97px;top:304.41px;font:400 26.57px 'Liberation Sans', sans-serif;line-height:1;color:#252525;transform:scaleX(0.9300);">5.7</div>
<div class="t" style="left:349.17px;top:358.21px;font:400 26.57px 'Liberation Sans', sans-serif;line-height:1;color:#252525;transform:scaleX(0.9300);">7.2</div>
</div>
<svg class="a" style="left:2537.4px;top:1038.7px" width="17.0" height="19.5" viewBox="0 0 17.0 19.5"><path d="M8.5,0 V17.3 M1.3,9.5 L8.5,17.9 L15.7,9.5" fill="none" stroke="#f00a14" stroke-width="3"/></svg>
<svg class="a" style="left:2392.3px;top:1073.7px" width="16.2" height="19.5" viewBox="0 0 16.2 19.5"><path d="M8.1,19.5 V2.2 M1.3,9.6 L8.1,1.6 L14.9,9.6" fill="none" stroke="#8cb318" stroke-width="3"/></svg>
<div style="position:absolute;left:2171.5px;top:1181.4px;width:269.7px;height:4.5px;background:#333;"></div>
<div style="position:absolute;left:2463.5px;top:1181.4px;width:338.3px;height:4.5px;background:#333;"></div>
<div style="position:absolute;left:2171.5px;top:1254.1px;width:269.7px;height:4.4px;background:#333;"></div>
<div style="position:absolute;left:2791.5px;top:1190.7px;width:10.3px;height:379.1px;background:#f2f2f2;border-radius:5px;"></div>
<div style="position:absolute;left:2791.5px;top:1190.7px;width:10.3px;height:200.5px;background:#cdcdcd;border-radius:5px;"></div>
<div style="position:absolute;left:2441.4px;top:1571.3px;width:349.5px;height:10.3px;background:#f2f2f2;border-radius:5px;"></div>
<div style="position:absolute;left:2441.4px;top:1571.3px;width:143.3px;height:10.3px;background:#cdcdcd;border-radius:5px;"></div>
<div class="t" style="left:2260.86px;top:1036.71px;font:400 23.29px 'Liberation Sans', sans-serif;line-height:1;color:#404040;transform:scaleX(0.9378);">East - Tea &amp; Coffee</div>
<div class="t" style="left:2465.00px;top:1033.79px;font:700 26.71px 'Liberation Sans', sans-serif;line-height:1;color:#333;transform:scaleX(1.0328);">22.6</div>
<div class="t" style="left:2564.60px;top:1036.71px;font:400 23.29px 'Liberation Sans', sans-serif;line-height:1;color:#404040;transform:scaleX(0.8916);">ΔAC1</div>
<div class="t" style="left:2625.79px;top:1036.71px;font:400 23.29px 'Liberation Sans', sans-serif;line-height:1;color:#f00a14;transform:scaleX(0.9134);">-0.9%</div>
<div class="t" style="left:2419.00px;top:1071.71px;font:400 23.29px 'Liberation Sans', sans-serif;line-height:1;color:#404040;transform:scaleX(0.8899);">ΔAC2</div>
<div class="t" style="left:2481.07px;top:1071.71px;font:400 23.29px 'Liberation Sans', sans-serif;line-height:1;color:#8cb318;transform:scaleX(0.9293);">+33.6%</div>
<div class="t" style="left:2464.40px;top:1135.94px;font:400 25.71px 'Liberation Sans', sans-serif;line-height:1;color:#252525;transform:scaleX(0.8992);">AC</div>
<div class="t" style="left:2183.90px;top:1214.35px;font:700 27.00px 'Liberation Sans', sans-serif;line-height:1;color:#252525;transform:scaleX(0.9576);">All</div>
<div class="t" style="left:2183.90px;top:1278.37px;font:400 26.86px 'Liberation Sans', sans-serif;line-height:1;color:#252525;transform:scaleX(0.9175);">January</div>
<div class="t" style="left:2181.98px;top:1332.17px;font:400 26.86px 'Liberation Sans', sans-serif;line-height:1;color:#252525;transform:scaleX(0.9618);">February</div>
<div class="t" style="left:2181.87px;top:1385.97px;font:400 26.86px 'Liberation Sans', sans-serif;line-height:1;color:#252525;transform:scaleX(1.0155);">March</div>
<div class="t" style="left:2183.90px;top:1439.77px;font:400 26.86px 'Liberation Sans', sans-serif;line-height:1;color:#252525;transform:scaleX(1.0083);">April</div>
<div class="t" style="left:2181.92px;top:1493.57px;font:400 26.86px 'Liberation Sans', sans-serif;line-height:1;color:#252525;transform:scaleX(0.9896);">May</div>
<div class="t" style="left:2183.90px;top:1547.37px;font:400 26.86px 'Liberation Sans', sans-serif;line-height:1;color:#252525;transform:scaleX(0.9109);">June</div>
<div class="a" style="left:2441.4px;top:1188.3px;width:350px;height:382px;overflow:hidden">
<div style="position:absolute;left:22.1px;top:65.8px;width:338.3px;height:4.4px;background:#333;"></div>
<div style="position:absolute;left:25.7px;top:75.0px;width:6.4px;height:315.0px;background:#2b2b2b;"></div>
<div style="position:absolute;left:23.0px;top:128.4px;width:9.1px;height:1.0px;background:#8a8a8a;"></div>
<div style="position:absolute;left:23.0px;top:182.2px;width:9.1px;height:1.0px;background:#8a8a8a;"></div>
<div style="position:absolute;left:23.0px;top:236.0px;width:9.1px;height:1.0px;background:#8a8a8a;"></div>
<div style="position:absolute;left:23.0px;top:289.8px;width:9.1px;height:1.0px;background:#8a8a8a;"></div>
<div style="position:absolute;left:23.0px;top:343.6px;width:9.1px;height:1.0px;background:#8a8a8a;"></div>
<div style="position:absolute;left:23.0px;top:397.4px;width:9.1px;height:1.0px;background:#8a8a8a;"></div>
<div style="position:absolute;left:32.1px;top:82.0px;width:48.5px;height:39.6px;background:#252525;"></div>
<div style="position:absolute;left:32.1px;top:135.8px;width:82.5px;height:39.6px;background:#252525;"></div>
<div style="position:absolute;left:32.1px;top:189.6px;width:163.8px;height:39.6px;background:#252525;"></div>
<div style="position:absolute;left:32.1px;top:243.4px;width:51.1px;height:39.6px;background:#252525;"></div>
<div style="position:absolute;left:32.1px;top:297.2px;width:270.1px;height:39.6px;background:#252525;"></div>
<div style="position:absolute;left:32.1px;top:351.0px;width:306.2px;height:39.6px;background:#252525;"></div>
<div class="t" style="left:329.80px;top:26.05px;font:700 27.00px 'Liberation Sans', sans-serif;line-height:1;color:#252525;transform:scaleX(0.9200);">22.6</div>
<div class="t" style="left:91.37px;top:89.21px;font:400 26.57px 'Liberation Sans', sans-serif;line-height:1;color:#252525;transform:scaleX(0.9300);">0.6</div>
<div class="t" style="left:124.44px;top:143.01px;font:400 26.57px 'Liberation Sans', sans-serif;line-height:1;color:#252525;transform:scaleX(0.9300);">1.1</div>
<div class="t" style="left:206.67px;top:196.81px;font:400 26.57px 'Liberation Sans', sans-serif;line-height:1;color:#252525;transform:scaleX(0.9300);">2.1</div>
<div class="t" style="left:93.97px;top:250.61px;font:400 26.57px 'Liberation Sans', sans-serif;line-height:1;color:#252525;transform:scaleX(0.9300);">0.7</div>
<div class="t" style="left:312.97px;top:304.41px;font:400 26.57px 'Liberation Sans', sans-serif;line-height:1;color:#252525;transform:scaleX(0.9300);">3.4</div>
<div class="t" style="left:349.07px;top:358.21px;font:400 26.57px 'Liberation Sans', sans-serif;line-height:1;color:#252525;transform:scaleX(0.9300);">3.5</div>
</div>
<div style="position:absolute;left:0.0px;top:0.0px;width:2852.0px;height:6.0px;background:linear-gradient(rgba(200,200,200,0.6),rgba(255,255,255,0));"></div>
<div style="position:absolute;left:2824.0px;top:449.8px;width:9.5px;height:1142.6px;background:#f2f2f2;border-radius:5px;"></div>
<div style="position:absolute;left:2824.0px;top:449.8px;width:9.5px;height:382.2px;background:#cdcdcd;border-radius:5px;"></div>
<div style="position:absolute;left:67.2px;top:1594.3px;width:2755.5px;height:9.5px;background:#f2f2f2;border-radius:5px;"></div>
<div style="position:absolute;left:67.2px;top:1594.3px;width:2209.5px;height:9.5px;background:#cdcdcd;border-radius:5px;"></div>
<div style="position:absolute;left:1057.5px;top:525.0px;width:856.5px;height:589.0px;background:#fff;border-radius:4px;box-shadow:0 1.5px 5px rgba(0,0,0,0.30), 0 0 5px rgba(0,0,0,0.14);"></div>
<svg class="a" style="left:1838px;top:573.5px" width="28" height="28" viewBox="0 0 28 28"><path d="M1.5,1.5 L26.5,26.5 M26.5,1.5 L1.5,26.5" stroke="#252525" stroke-width="2.6" fill="none"/></svg>
<div style="position:absolute;left:1094.5px;top:698.3px;width:785.0px;height:313.5px;background:#fff;box-sizing:border-box;border:1.5px solid #8f8f8f;"></div>
<div class="t" style="left:1091.79px;top:565.50px;font:400 50.00px 'Liberation Sans', sans-serif;line-height:1;color:#3a3a3a;transform:scaleX(0.8768);-webkit-text-stroke:1.5px #fff;">Export Settings</div>
<div class="t" style="left:1093.60px;top:648.39px;font:400 27.43px 'Liberation Sans', sans-serif;line-height:1;color:#333;transform:scaleX(0.9976);">Copy or download configuration from here.</div>
<div class="a" style="left:1096px;top:700px;width:770px;height:310.5px;overflow:hidden">
<div class="t" style="left:11.50px;top:16.99px;font:400 29.43px 'Liberation Sans', sans-serif;line-height:1;color:#000;transform:scaleX(0.9922);">{&quot;config&quot;:{&quot;additionalDataRow&quot;:{&quot;id&quot;:&quot;&quot;},&quot;advancedSorting&quot;:</div>
<div class="t" style="left:11.50px;top:60.29px;font:400 29.43px 'Liberation Sans', sans-serif;line-height:1;color:#000;transform:scaleX(0.9748);">{&quot;sortDescriptors&quot;:[]},&quot;aggregateSeries&quot;:</div>
<div class="t" style="left:11.50px;top:104.79px;font:400 29.43px 'Liberation Sans', sans-serif;line-height:1;color:#000;transform:scaleX(0.9800);">{&quot;instanceId&quot;:null,&quot;averageText&quot;:&quot;ΦAvg&quot;,&quot;totalText&quot;:&quot;Total&quot;,&quot;</div>
<div class="t" style="left:11.50px;top:148.69px;font:400 29.43px 'Liberation Sans', sans-serif;line-height:1;color:#000;transform:scaleX(0.9901);">totalTextIsDirty&quot;:false,&quot;ttTotalText&quot;:&quot;Tooltip</div>
<div class="t" style="left:11.50px;top:191.79px;font:400 29.43px 'Liberation Sans', sans-serif;line-height:1;color:#000;transform:scaleX(0.9857);">Total&quot;,&quot;isBold&quot;:true,&quot;isItalic&quot;:false,&quot;fontColor&quot;:&quot;#333333&quot;,&quot;fo</div>
<div class="t" style="left:10.52px;top:236.39px;font:400 29.43px 'Liberation Sans', sans-serif;line-height:1;color:#000;transform:scaleX(0.9814);">ntSize&quot;:null,&quot;fontFamily&quot;:&quot;\&quot;Segoe UI\&quot;, wf_segoe-</div>
<div class="t" style="left:10.54px;top:280.29px;font:400 29.43px 'Liberation Sans', sans-serif;line-height:1;color:#000;transform:scaleX(0.9640);">ui_normal, helvetica, arial, sans-serif&quot;},&quot;analytics&quot;:</div>
</div>
<div style="position:absolute;left:1868.3px;top:700.0px;width:9.5px;height:310.0px;background:#f3f3f3;border-radius:4px;"></div>
<div style="position:absolute;left:1868.3px;top:700.0px;width:9.5px;height:32.5px;background:#cfcfcf;border-radius:4px;"></div>
<div style="position:absolute;left:1687.4px;top:1036.8px;width:192.2px;height:50.2px;background:#0078d4;border-radius:3px;"></div>
<div class="t" style="left:1726.14px;top:1047.76px;font:700 27.57px 'Liberation Sans', sans-serif;line-height:1;color:#fff;transform:scaleX(0.8649);">Download</div>
<svg class="a" style="left:2820px;top:234px" width="20" height="18" viewBox="2820 234 20 18"><path d="M2825.6,246.8 L2832.4,239.6" stroke="#333" stroke-width="2"/></svg>
<div style="position:absolute;left:2544.0px;top:148.4px;width:281.3px;height:144.6px;background:#fff;border-radius:3px;box-shadow:0 0.5px 3px rgba(0,0,0,0.25);"></div>
<div class="t" style="left:2574.47px;top:173.20px;font:400 26.00px 'Liberation Sans', sans-serif;line-height:1;color:#252525;transform:scaleX(1.0171);">Export Settings</div>
<div class="t" style="left:2574.95px;top:245.31px;font:400 26.57px 'Liberation Sans', sans-serif;line-height:1;color:#252525;transform:scaleX(1.0263);">Import Settings</div>
<div style="position:absolute;left:2602.7px;top:80.0px;width:110.3px;height:79.7px;background:transparent;box-sizing:border-box;border:2.6px solid #ff0000;border-radius:9px;box-shadow:0 1px 6px rgba(0,0,0,0.22), inset 0 1px 6px rgba(0,0,0,0.16);"></div>
<div class="t" style="left:2702.87px;top:41.39px;font:400 41.43px 'Liberation Sans', sans-serif;line-height:1;color:#ff0000;transform:scaleX(0.6105);text-shadow:0 1px 5px rgba(0,0,0,0.45);-webkit-text-stroke:0.7px #f00;">1</div>
<div class="t" style="left:1418.30px;top:534.27px;font:400 40.86px 'Liberation Sans', sans-serif;line-height:1;color:#ff0000;text-shadow:0 1px 5px rgba(0,0,0,0.45);-webkit-text-stroke:0.7px #f00;">2</div>
<div style="position:absolute;left:2849.8px;top:0.0px;width:1.0px;height:1619.0px;background:#d4d4d4;"></div>
<div class="a" style="left:2850.8px;top:0;width:1.2px;height:1619px;background:repeating-linear-gradient(transparent 0 1.1px,#4a4a4a 1.1px 3.7px,transparent 3.7px 6px)"></div>
<div class="a" style="left:0;top:1615px;width:2852px;height:2.9px;background:repeating-linear-gradient(90deg,transparent 0 2.05px,#4a4a4a 2.05px 4.75px,transparent 4.75px 6px)"></div>
<div style="position:absolute;left:0.0px;top:0.0px;width:12.0px;height:3.0px;background:#8a8a8a;"></div>
<div style="position:absolute;left:0.0px;top:0.0px;width:3.0px;height:12.0px;background:#8a8a8a;"></div>
<div style="position:absolute;left:1415.2px;top:0.0px;width:18.1px;height:3.0px;background:#999;"></div>
<div style="position:absolute;left:0.0px;top:798.0px;width:2.5px;height:18.0px;background:#999;"></div>
<div style="position:absolute;left:2846.4px;top:798.0px;width:5.6px;height:18.4px;background:#999;"></div>
<div style="position:absolute;left:1415.8px;top:1612.0px;width:17.0px;height:3.0px;background:#999;"></div>
<div style="position:absolute;left:2838.0px;top:1616.0px;width:14.0px;height:3.0px;background:#8a8a8a;"></div>
<div style="position:absolute;left:2849.0px;top:1602.0px;width:3.0px;height:17.0px;background:#8a8a8a;"></div>
<div style="position:absolute;left:0.0px;top:1616.0px;width:12.0px;height:3.0px;background:#8a8a8a;"></div>
<div style="position:absolute;left:0.0px;top:1604.0px;width:3.0px;height:15.0px;background:#8a8a8a;"></div>
<div style="position:absolute;left:14.9px;top:1531.3px;width:62.9px;height:62.9px;background:#fff;border-radius:4.5px;box-shadow:0 1px 6px rgba(0,0,0,0.22);"></div>
<svg class="a" style="left:30px;top:1548px" width="32" height="30" viewBox="30 1548 32 30"><rect x="33.8" y="1554.1" width="3.3" height="13.8" fill="none" stroke="#333" stroke-width="1.1"/><path d="M40.5,1563.5 V1557.4 H44 V1561.5" fill="none" stroke="#333" stroke-width="1.1"/><rect x="47.7" y="1550.8" width="3" height="10" fill="none" stroke="#333" stroke-width="1.1"/><path d="M38.6,1572.3 A10.6,8.4 0 0 1 59.6,1572.3" fill="none" stroke="#333" stroke-width="1.2"/><circle cx="48.9" cy="1572.7" r="3.5" fill="none" stroke="#333" stroke-width="1.2"/></svg>
</body></html>
